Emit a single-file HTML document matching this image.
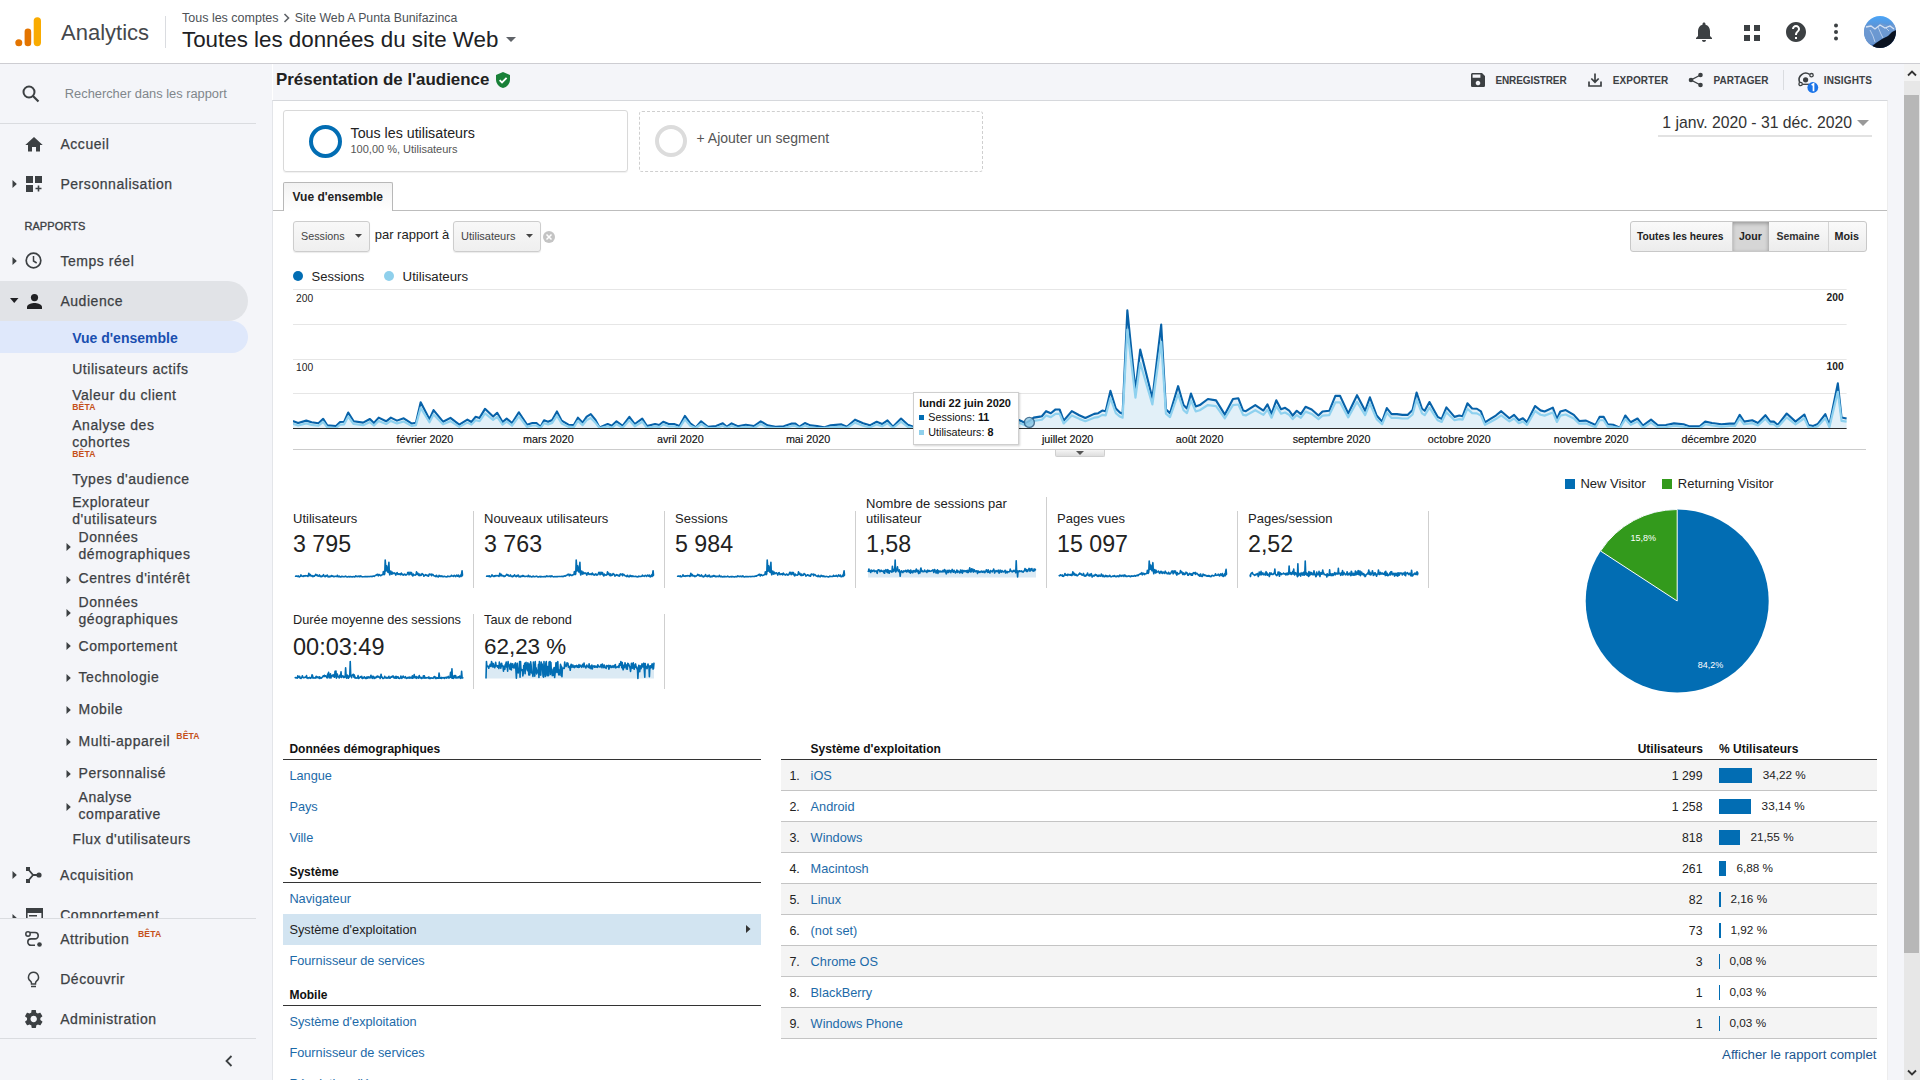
<!DOCTYPE html>
<html><head><meta charset="utf-8"><title>Analytics</title>
<style>
html,body{margin:0;padding:0;}
body{width:1920px;height:1080px;overflow:hidden;position:relative;background:#fff;font-family:"Liberation Sans", sans-serif;}
.t{position:absolute;white-space:nowrap;font-family:"Liberation Sans", sans-serif;}
svg{overflow:visible}
</style></head><body>
<div style="position:absolute;left:0px;top:0px;width:1920px;height:63px;background:#fff"></div><div style="position:absolute;left:0px;top:63px;width:1920px;height:1px;background:#cdcdd2"></div><svg style="position:absolute;left:10px;top:10px;" width="40" height="40" viewBox="0 0 40 40"><circle cx="8.8" cy="32.7" r="3.5" fill="#e37400"/><rect x="14.6" y="18.6" width="6.6" height="17.6" rx="3.3" fill="#e37400"/><rect x="23.7" y="7.2" width="7.3" height="29" rx="3.65" fill="#f9ab00"/></svg><div class="t" style="left:61.00px;top:21.88px;font-size:22px;line-height:22px;color:#45484c;font-weight:normal;">Analytics</div><div style="position:absolute;left:165px;top:16px;width:1px;height:32px;background:#dadce0"></div><div class="t" style="left:182.00px;top:12.22px;font-size:12.5px;line-height:12.5px;color:#4d5156;font-weight:normal;">Tous les comptes</div><svg style="position:absolute;left:283px;top:13px;" width="8" height="10" viewBox="0 0 8 10"><path d="M1.5 1 L5.5 5 L1.5 9" stroke="#5f6368" stroke-width="1.6" fill="none"/></svg><div class="t" style="left:294.80px;top:12.39px;font-size:12.3px;line-height:12.3px;color:#4d5156;font-weight:normal;">Site Web A Punta Bunifazinca</div><div class="t" style="left:182.00px;top:28.88px;font-size:22.35px;line-height:22.35px;color:#202124;font-weight:normal;">Toutes les données du site Web</div><svg style="position:absolute;left:506px;top:37px;" width="10" height="6" viewBox="0 0 10 6"><path d="M0 0 L10 0 L5 5 Z" fill="#5f6368"/></svg><svg style="position:absolute;left:1692px;top:20px;" width="24" height="24" viewBox="0 0 24 24"><path fill="#3c4043" d="M12 22c1.1 0 2-.9 2-2h-4c0 1.1.89 2 2 2zm6-6v-5c0-3.07-1.64-5.64-4.5-6.32V4c0-.83-.67-1.5-1.5-1.5s-1.5.67-1.5 1.5v.68C7.63 5.36 6 7.92 6 11v5l-2 2v1h16v-1l-2-2z"/></svg><svg style="position:absolute;left:1744px;top:25px;" width="16" height="16" viewBox="0 0 16 16"><rect x="0" y="0" width="6" height="6" fill="#3c4043"/><rect x="10" y="0" width="6" height="6" fill="#3c4043"/><rect x="0" y="10" width="6" height="6" fill="#3c4043"/><rect x="10" y="10" width="6" height="6" fill="#3c4043"/></svg><svg style="position:absolute;left:1784px;top:20px;" width="24" height="24" viewBox="0 0 24 24"><path fill="#3c4043" d="M12 2C6.48 2 2 6.48 2 12s4.48 10 10 10 10-4.48 10-10S17.52 2 12 2zm1 17h-2v-2h2v2zm2.07-7.75l-.9.92C13.45 12.9 13 13.5 13 15h-2v-.5c0-1.1.45-2.1 1.17-2.83l1.24-1.26c.37-.36.59-.86.59-1.41 0-1.1-.9-2-2-2s-2 .9-2 2H8c0-2.21 1.79-4 4-4s4 1.79 4 4c0 .88-.36 1.68-.93 2.25z"/></svg><svg style="position:absolute;left:1832px;top:22px;" width="8" height="20" viewBox="0 0 8 20"><circle cx="4" cy="3.5" r="2" fill="#3c4043"/><circle cx="4" cy="10" r="2" fill="#3c4043"/><circle cx="4" cy="16.5" r="2" fill="#3c4043"/></svg><svg style="position:absolute;left:1864px;top:16px;" width="32" height="32" viewBox="0 0 32 32"><defs><clipPath id="av"><circle cx="16" cy="16" r="16"/></clipPath><linearGradient id="avg" x1="0" y1="0" x2="0" y2="1"><stop offset="0" stop-color="#4aa5f8"/><stop offset="0.3" stop-color="#5b95d8"/><stop offset="1" stop-color="#3d6fb8"/></linearGradient></defs><g clip-path="url(#av)"><rect width="32" height="32" fill="url(#avg)"/><path d="M0 10 L6 8 L11 11 L17 7 L23 9 L32 8 L32 18 L20 22 L10 28 L0 30Z" fill="#6f9ad2" opacity="0.9"/><path d="M2 11 L7 10 L11 13 L16 9 L21 12 L26 10 L30 13" stroke="#e6eefa" stroke-width="1.3" fill="none" opacity="0.85"/><path d="M6 14 L9 20 L11 26 M14 11 L17 18 L19 22 M22 12 L25 15" stroke="#d5e3f6" stroke-width="1" fill="none" opacity="0.7"/><path d="M6 32 L12 27 L18 23 L24 20 L28 16 L32 14 L32 32Z" fill="#0a1220"/></g></svg><div style="position:absolute;left:0px;top:64px;width:272px;height:1016px;background:#f4f5f9"></div><div style="position:absolute;left:272px;top:100px;width:1px;height:980px;background:#e3e5e9"></div><svg style="position:absolute;left:21px;top:84px;" width="20" height="20" viewBox="0 0 20 20"><circle cx="8" cy="8" r="5.5" stroke="#3c4043" stroke-width="2" fill="none"/><path d="M12 12 L17.5 17.5" stroke="#3c4043" stroke-width="2.2"/></svg><div class="t" style="left:64.80px;top:88.42px;font-size:12.85px;line-height:12.85px;color:#80868b;font-weight:normal;">Rechercher dans les rapport</div><div style="position:absolute;left:0px;top:123px;width:256px;height:1px;background:#dadce0"></div><svg style="position:absolute;left:25px;top:137px;" width="18" height="15" viewBox="0 0 18 15"><path d="M7 14.5V10h4v4.5h4V8h2.7L9 0 .3 8H3v6.5z" fill="#3c4043"/></svg><div class="t" style="left:60.40px;top:137.15px;font-size:14px;line-height:14px;color:#3c4043;font-weight:normal;letter-spacing:0.55px;-webkit-text-stroke:0.25px #3c4043;">Accueil</div><svg style="position:absolute;left:12px;top:180px;" width="6" height="8" viewBox="0 0 6 8"><path d="M0.5 0 L4.8 4 L0.5 8Z" fill="#3c4043"/></svg><svg style="position:absolute;left:26px;top:176px;" width="16" height="16" viewBox="0 0 16 16"><rect x="0" y="0" width="7" height="7" fill="#3c4043"/><rect x="9" y="0" width="7" height="7" fill="#3c4043"/><rect x="0" y="9" width="7" height="7" fill="#3c4043"/><path d="M12.5 9.5v6M9.5 12.5h6" stroke="#3c4043" stroke-width="1.6"/></svg><div class="t" style="left:60.40px;top:177.15px;font-size:14px;line-height:14px;color:#3c4043;font-weight:normal;letter-spacing:0.55px;-webkit-text-stroke:0.25px #3c4043;">Personnalisation</div><div class="t" style="left:24.40px;top:221.29px;font-size:11px;line-height:11px;color:#3c4043;font-weight:normal;letter-spacing:0.1px;-webkit-text-stroke:0.35px #3c4043;">RAPPORTS</div><svg style="position:absolute;left:12px;top:257px;" width="6" height="8" viewBox="0 0 6 8"><path d="M0.5 0 L4.8 4 L0.5 8Z" fill="#3c4043"/></svg><svg style="position:absolute;left:25px;top:252px;" width="17" height="17" viewBox="0 0 17 17"><circle cx="8.5" cy="8.5" r="7.3" stroke="#3c4043" stroke-width="1.7" fill="none"/><path d="M8.5 4v5l3.2 2" stroke="#3c4043" stroke-width="1.5" fill="none"/></svg><div class="t" style="left:60.40px;top:254.35px;font-size:14px;line-height:14px;color:#3c4043;font-weight:normal;letter-spacing:0.55px;-webkit-text-stroke:0.25px #3c4043;">Temps réel</div><div style="position:absolute;left:0;top:281px;width:248px;height:40px;background:#e1e3e7;border-radius:0 20px 20px 0"></div><svg style="position:absolute;left:10px;top:298px;" width="9" height="6" viewBox="0 0 9 6"><path d="M0 0 L8.5 0 L4.25 5Z" fill="#202124"/></svg><svg style="position:absolute;left:27px;top:294px;" width="15" height="15" viewBox="0 0 15 15"><circle cx="7.5" cy="3.6" r="3.6" fill="#202124"/><path d="M0 15v-2.2c0-2.5 5-3.8 7.5-3.8S15 10.3 15 12.8V15z" fill="#202124"/></svg><div class="t" style="left:60.40px;top:294.35px;font-size:14px;line-height:14px;color:#3c4043;font-weight:normal;letter-spacing:0.55px;-webkit-text-stroke:0.25px #3c4043;">Audience</div><div style="position:absolute;left:0;top:321px;width:248px;height:32px;background:#dfe8fb;border-radius:0 16px 16px 0"></div><div class="t" style="left:72.20px;top:330.55px;font-size:14px;line-height:14px;color:#1a4fb0;font-weight:bold;letter-spacing:0px;">Vue d'ensemble</div><div class="t" style="left:72.20px;top:361.75px;font-size:14px;line-height:14px;color:#3c4043;font-weight:normal;letter-spacing:0.55px;-webkit-text-stroke:0.25px #3c4043;">Utilisateurs actifs</div><div class="t" style="left:72.20px;top:387.55px;font-size:14px;line-height:14px;color:#3c4043;font-weight:normal;letter-spacing:0.55px;-webkit-text-stroke:0.25px #3c4043;">Valeur du client</div><div class="t" style="left:72.20px;top:402.72px;font-size:8.6px;line-height:8.6px;color:#c5501a;font-weight:bold;letter-spacing:0.15px;">BÊTA</div><div class="t" style="left:72.20px;top:417.55px;font-size:14px;line-height:14px;color:#3c4043;font-weight:normal;letter-spacing:0.55px;-webkit-text-stroke:0.25px #3c4043;">Analyse des</div><div class="t" style="left:72.20px;top:434.55px;font-size:14px;line-height:14px;color:#3c4043;font-weight:normal;letter-spacing:0.55px;-webkit-text-stroke:0.25px #3c4043;">cohortes</div><div class="t" style="left:72.20px;top:449.72px;font-size:8.6px;line-height:8.6px;color:#c5501a;font-weight:bold;letter-spacing:0.15px;">BÊTA</div><div class="t" style="left:72.20px;top:471.75px;font-size:14px;line-height:14px;color:#3c4043;font-weight:normal;letter-spacing:0.55px;-webkit-text-stroke:0.25px #3c4043;">Types d'audience</div><div class="t" style="left:72.20px;top:495.45px;font-size:14px;line-height:14px;color:#3c4043;font-weight:normal;letter-spacing:0.55px;-webkit-text-stroke:0.25px #3c4043;">Explorateur</div><div class="t" style="left:72.20px;top:512.35px;font-size:14px;line-height:14px;color:#3c4043;font-weight:normal;letter-spacing:0.55px;-webkit-text-stroke:0.25px #3c4043;">d'utilisateurs</div><svg style="position:absolute;left:66px;top:543px;" width="6" height="8" viewBox="0 0 6 8"><path d="M0.5 0 L4.8 4 L0.5 8Z" fill="#3c4043"/></svg><div class="t" style="left:78.50px;top:529.65px;font-size:14px;line-height:14px;color:#3c4043;font-weight:normal;letter-spacing:0.55px;-webkit-text-stroke:0.25px #3c4043;">Données</div><div class="t" style="left:78.50px;top:546.75px;font-size:14px;line-height:14px;color:#3c4043;font-weight:normal;letter-spacing:0.55px;-webkit-text-stroke:0.25px #3c4043;">démographiques</div><svg style="position:absolute;left:66px;top:576px;" width="6" height="8" viewBox="0 0 6 8"><path d="M0.5 0 L4.8 4 L0.5 8Z" fill="#3c4043"/></svg><div class="t" style="left:78.50px;top:571.35px;font-size:14px;line-height:14px;color:#3c4043;font-weight:normal;letter-spacing:0.55px;-webkit-text-stroke:0.25px #3c4043;">Centres d'intérêt</div><svg style="position:absolute;left:66px;top:609px;" width="6" height="8" viewBox="0 0 6 8"><path d="M0.5 0 L4.8 4 L0.5 8Z" fill="#3c4043"/></svg><div class="t" style="left:78.50px;top:595.15px;font-size:14px;line-height:14px;color:#3c4043;font-weight:normal;letter-spacing:0.55px;-webkit-text-stroke:0.25px #3c4043;">Données</div><div class="t" style="left:78.50px;top:612.15px;font-size:14px;line-height:14px;color:#3c4043;font-weight:normal;letter-spacing:0.55px;-webkit-text-stroke:0.25px #3c4043;">géographiques</div><svg style="position:absolute;left:66px;top:642px;" width="6" height="8" viewBox="0 0 6 8"><path d="M0.5 0 L4.8 4 L0.5 8Z" fill="#3c4043"/></svg><div class="t" style="left:78.50px;top:638.75px;font-size:14px;line-height:14px;color:#3c4043;font-weight:normal;letter-spacing:0.55px;-webkit-text-stroke:0.25px #3c4043;">Comportement</div><svg style="position:absolute;left:66px;top:674px;" width="6" height="8" viewBox="0 0 6 8"><path d="M0.5 0 L4.8 4 L0.5 8Z" fill="#3c4043"/></svg><div class="t" style="left:78.50px;top:670.35px;font-size:14px;line-height:14px;color:#3c4043;font-weight:normal;letter-spacing:0.55px;-webkit-text-stroke:0.25px #3c4043;">Technologie</div><svg style="position:absolute;left:66px;top:706px;" width="6" height="8" viewBox="0 0 6 8"><path d="M0.5 0 L4.8 4 L0.5 8Z" fill="#3c4043"/></svg><div class="t" style="left:78.50px;top:702.15px;font-size:14px;line-height:14px;color:#3c4043;font-weight:normal;letter-spacing:0.55px;-webkit-text-stroke:0.25px #3c4043;">Mobile</div><svg style="position:absolute;left:66px;top:737.5px;" width="6" height="8" viewBox="0 0 6 8"><path d="M0.5 0 L4.8 4 L0.5 8Z" fill="#3c4043"/></svg><div class="t" style="left:78.50px;top:733.85px;font-size:14px;line-height:14px;color:#3c4043;font-weight:normal;letter-spacing:0.55px;-webkit-text-stroke:0.25px #3c4043;">Multi-appareil</div><div class="t" style="left:176.30px;top:732.22px;font-size:8.6px;line-height:8.6px;color:#c5501a;font-weight:bold;letter-spacing:0.15px;">BÊTA</div><svg style="position:absolute;left:66px;top:769.5px;" width="6" height="8" viewBox="0 0 6 8"><path d="M0.5 0 L4.8 4 L0.5 8Z" fill="#3c4043"/></svg><div class="t" style="left:78.50px;top:765.75px;font-size:14px;line-height:14px;color:#3c4043;font-weight:normal;letter-spacing:0.55px;-webkit-text-stroke:0.25px #3c4043;">Personnalisé</div><svg style="position:absolute;left:66px;top:802.5px;" width="6" height="8" viewBox="0 0 6 8"><path d="M0.5 0 L4.8 4 L0.5 8Z" fill="#3c4043"/></svg><div class="t" style="left:78.50px;top:790.15px;font-size:14px;line-height:14px;color:#3c4043;font-weight:normal;letter-spacing:0.55px;-webkit-text-stroke:0.25px #3c4043;">Analyse</div><div class="t" style="left:78.50px;top:807.25px;font-size:14px;line-height:14px;color:#3c4043;font-weight:normal;letter-spacing:0.55px;-webkit-text-stroke:0.25px #3c4043;">comparative</div><div class="t" style="left:72.60px;top:831.65px;font-size:14px;line-height:14px;color:#3c4043;font-weight:normal;letter-spacing:0.55px;-webkit-text-stroke:0.25px #3c4043;">Flux d'utilisateurs</div><svg style="position:absolute;left:12px;top:871px;" width="6" height="8" viewBox="0 0 6 8"><path d="M0.5 0 L4.8 4 L0.5 8Z" fill="#3c4043"/></svg><svg style="position:absolute;left:26px;top:867px;" width="16" height="16" viewBox="0 0 16 16"><rect x="0" y="0" width="4" height="4" fill="#3c4043"/><rect x="0" y="12" width="4" height="4" fill="#3c4043"/><circle cx="13" cy="8" r="2.6" fill="#3c4043"/><path d="M2 2 L7 8 L2 14 M7 8 H13" stroke="#3c4043" stroke-width="1.8" fill="none"/></svg><div class="t" style="left:60.10px;top:867.95px;font-size:14px;line-height:14px;color:#3c4043;font-weight:normal;letter-spacing:0.55px;-webkit-text-stroke:0.25px #3c4043;">Acquisition</div><div style="position:absolute;left:0;top:900px;width:272px;height:18px;overflow:hidden"><svg style="position:absolute;left:12px;top:14px" width="6" height="8"><path d="M0.5 0 L4.8 4 L0.5 8Z" fill="#3c4043"/></svg><svg style="position:absolute;left:26px;top:8px" width="17" height="15"><rect x="0.8" y="0.8" width="15.4" height="13.4" rx="1" stroke="#3c4043" stroke-width="1.6" fill="none"/><rect x="0" y="0" width="17" height="5" fill="#3c4043"/><rect x="3" y="7" width="8" height="1.5" fill="#3c4043"/></svg><div class="t" style="left:60.2px;top:7.95px;font-size:14px;line-height:14px;color:#3c4043;letter-spacing:0.55px;-webkit-text-stroke:0.25px #3c4043;">Comportement</div></div><div style="position:absolute;left:0px;top:918px;width:256px;height:1px;background:#dadce0"></div><svg style="position:absolute;left:25px;top:931px;" width="18" height="16" viewBox="0 0 18 16"><circle cx="3" cy="3" r="2.2" stroke="#3c4043" stroke-width="1.5" fill="none"/><path d="M5 3 H10 a3.2 3.2 0 0 1 0 6.4 H6 a3.2 3.2 0 0 0 0 6.4 H10" stroke="#3c4043" stroke-width="1.6" fill="none" transform="translate(0,-1.5)"/><circle cx="14.5" cy="13.5" r="2.3" fill="#3c4043"/></svg><div class="t" style="left:60.20px;top:932.05px;font-size:14px;line-height:14px;color:#3c4043;font-weight:normal;letter-spacing:0.55px;-webkit-text-stroke:0.25px #3c4043;">Attribution</div><div class="t" style="left:138.00px;top:930.32px;font-size:8.6px;line-height:8.6px;color:#c5501a;font-weight:bold;letter-spacing:0.15px;">BÊTA</div><svg style="position:absolute;left:27px;top:971px;" width="13" height="17" viewBox="0 0 13 17"><path d="M6.5 1.2a5 5 0 0 0-3 9c.6.5 1 1.2 1 2v.8h4v-.8c0-.8.4-1.5 1-2a5 5 0 0 0-3-9z" stroke="#3c4043" stroke-width="1.5" fill="none"/><path d="M4 15.5h5" stroke="#3c4043" stroke-width="1.5"/></svg><div class="t" style="left:60.20px;top:972.15px;font-size:14px;line-height:14px;color:#3c4043;font-weight:normal;letter-spacing:0.55px;-webkit-text-stroke:0.25px #3c4043;">Découvrir</div><svg style="position:absolute;left:25px;top:1010px;" width="18" height="18" viewBox="0 0 18 18"><path fill="#3c4043" d="M15.3 9.9c0-.3.1-.6.1-.9s0-.6-.1-.9l1.9-1.5c.2-.1.2-.4.1-.6l-1.8-3.1c-.1-.2-.4-.3-.6-.2l-2.2.9c-.5-.4-1-.7-1.5-.9L10.9.4C10.9.2 10.7 0 10.5 0H6.9c-.2 0-.4.2-.4.4l-.3 2.3c-.6.2-1.1.5-1.6.9l-2.2-.9c-.2-.1-.5 0-.6.2L.1 6c-.1.2-.1.5.1.6l1.9 1.5c0 .3-.1.6-.1.9s0 .6.1.9L.2 11.4c-.2.1-.2.4-.1.6l1.8 3.1c.1.2.4.3.6.2l2.2-.9c.5.4 1 .7 1.6.9l.3 2.3c0 .2.2.4.4.4h3.6c.2 0 .4-.2.4-.4l.3-2.3c.6-.2 1.1-.5 1.5-.9l2.2.9c.2.1.5 0 .6-.2l1.8-3.1c.1-.2.1-.5-.1-.6l-1.9-1.5zM8.7 12.2c-1.8 0-3.2-1.4-3.2-3.2s1.4-3.2 3.2-3.2 3.2 1.4 3.2 3.2-1.4 3.2-3.2 3.2z"/></svg><div class="t" style="left:60.20px;top:1012.15px;font-size:14px;line-height:14px;color:#3c4043;font-weight:normal;letter-spacing:0.55px;-webkit-text-stroke:0.25px #3c4043;">Administration</div><div style="position:absolute;left:0px;top:1038px;width:256px;height:1px;background:#dadce0"></div><svg style="position:absolute;left:224px;top:1055px;" width="10" height="12" viewBox="0 0 10 12"><path d="M7.5 1 L2.5 6 L7.5 11" stroke="#3c4043" stroke-width="1.8" fill="none"/></svg><div style="position:absolute;left:273px;top:64px;width:1631px;height:1016px;background:#f4f5f9"></div><div class="t" style="left:276.00px;top:71.69px;font-size:16.9px;line-height:16.9px;color:#212121;font-weight:bold;">Présentation de l'audience</div><svg style="position:absolute;left:495px;top:72px;" width="16" height="16" viewBox="0 0 16 16"><path d="M8 0 L15 3 V7.5 C15 11.6 12 15.2 8 16 C4 15.2 1 11.6 1 7.5 V3 Z" fill="#188038"/><path d="M4.6 8.2 L7 10.5 L11.6 5.8" stroke="#fff" stroke-width="1.8" fill="none"/></svg><svg style="position:absolute;left:1471px;top:73px;" width="14" height="14" viewBox="0 0 14 14"><path fill="#3c4043" d="M11 0H1.6C.7 0 0 .7 0 1.6v10.8c0 .9.7 1.6 1.6 1.6h10.8c.9 0 1.6-.7 1.6-1.6V3zM7 12.4c-1.3 0-2.3-1-2.3-2.3S5.7 7.8 7 7.8s2.3 1 2.3 2.3-1 2.3-2.3 2.3zM9.4 4.7H1.6V1.6h7.8z"/></svg><div class="t" style="left:1495.40px;top:76.13px;font-size:10px;line-height:10px;color:#3c4043;font-weight:bold;letter-spacing:-0.1px;">ENREGISTRER</div><svg style="position:absolute;left:1588px;top:73px;" width="14" height="14" viewBox="0 0 14 14"><path d="M7 0.5 V9 M3.3 5.5 L7 9.2 L10.7 5.5" stroke="#3c4043" stroke-width="1.7" fill="none"/><path d="M1 8.5 V13 H13 V8.5" stroke="#3c4043" stroke-width="1.7" fill="none"/></svg><div class="t" style="left:1612.75px;top:76.13px;font-size:10px;line-height:10px;color:#3c4043;font-weight:bold;letter-spacing:0.05px;">EXPORTER</div><svg style="position:absolute;left:1688px;top:72px;" width="16" height="16" viewBox="0 0 16 16"><circle cx="12.5" cy="3" r="2.3" fill="#3c4043"/><circle cx="3" cy="8" r="2.3" fill="#3c4043"/><circle cx="12.5" cy="13" r="2.3" fill="#3c4043"/><path d="M12.5 3 L3 8 L12.5 13" stroke="#3c4043" stroke-width="1.4" fill="none"/></svg><div class="t" style="left:1713.50px;top:76.13px;font-size:10px;line-height:10px;color:#3c4043;font-weight:bold;letter-spacing:0.05px;">PARTAGER</div><div style="position:absolute;left:1783px;top:70px;width:1px;height:20px;background:#dadce0"></div><svg style="position:absolute;left:1797px;top:71px;" width="22" height="22" viewBox="0 0 22 22"><path d="M2.6 11.2 A6.6 6.6 0 0 1 12.6 3.4" stroke="#3c4043" stroke-width="1.6" fill="none"/><circle cx="8.6" cy="8.8" r="2.6" fill="#3c4043"/><circle cx="14.5" cy="4.2" r="1.7" fill="none" stroke="#3c4043" stroke-width="1.3"/><circle cx="3.6" cy="13" r="1.7" fill="none" stroke="#3c4043" stroke-width="1.3"/><path d="M5.3 13.3 H12" stroke="#3c4043" stroke-width="1.3"/><circle cx="15.8" cy="16.5" r="5.4" fill="#1a73e8"/><path d="M14.6 13.9 L16.5 12.9 V20.2" stroke="#fff" stroke-width="1.7" fill="none"/></svg><div class="t" style="left:1823.75px;top:76.13px;font-size:10px;line-height:10px;color:#3c4043;font-weight:bold;letter-spacing:0.15px;">INSIGHTS</div><div style="position:absolute;left:272px;top:100px;width:1616px;height:980px;background:#fff;border-top:1px solid #d6d8dc;border-left:1px solid #e3e5e9;border-right:1px solid #ededed;box-sizing:border-box"></div><div style="position:absolute;left:283px;top:110px;width:345px;height:62px;box-sizing:border-box;border:1px solid #d9d9d9;border-radius:3px;box-shadow:0 1px 1px rgba(0,0,0,0.06)"></div><div style="position:absolute;left:308.5px;top:124.5px;width:33px;height:33px;box-sizing:border-box;border:4.5px solid #026db3;border-radius:50%"></div><div class="t" style="left:350.50px;top:125.74px;font-size:14.25px;line-height:14.25px;color:#222;font-weight:normal;">Tous les utilisateurs</div><div class="t" style="left:350.50px;top:143.69px;font-size:11px;line-height:11px;color:#555;font-weight:normal;">100,00 %, Utilisateurs</div><div style="position:absolute;left:639px;top:110.5px;width:344px;height:61px;box-sizing:border-box;border:1px dashed #cfcfcf;border-radius:3px"></div><div style="position:absolute;left:655px;top:125px;width:32px;height:32px;box-sizing:border-box;border:4px solid #dcdcdc;border-radius:50%"></div><div class="t" style="left:696.50px;top:130.95px;font-size:14px;line-height:14px;color:#555;font-weight:normal;">+ Ajouter un segment</div><div class="t" style="left:1662.30px;top:115.37px;font-size:15.75px;line-height:15.75px;color:#333;font-weight:normal;">1 janv. 2020 - 31 déc. 2020</div><svg style="position:absolute;left:1857px;top:120px;" width="12" height="6" viewBox="0 0 12 6"><path d="M0 0 L12 0 L6 6Z" fill="#999"/></svg><div style="position:absolute;left:1658px;top:135px;width:214px;height:2px;background:#e2e2e2"></div><div style="position:absolute;left:273px;top:210px;width:1614px;height:1px;background:#bdbdbd"></div><div style="position:absolute;left:282.5px;top:182px;width:110px;height:29px;box-sizing:border-box;border:1px solid #b8b8b8;border-bottom:none;border-radius:2px 2px 0 0;background:linear-gradient(#f2f2f2,#fff)"></div><div class="t" style="left:292.50px;top:190.64px;font-size:12px;line-height:12px;color:#222;font-weight:bold;">Vue d'ensemble</div><div style="position:absolute;left:292.5px;top:220.8px;width:77.0px;height:30.8px;box-sizing:border-box;border:1px solid #cdcdcd;border-radius:3px;background:linear-gradient(#f8f8f8,#efefef);box-shadow:0 1px 1px rgba(0,0,0,0.08)"></div><div class="t" style="left:301.00px;top:230.70px;font-size:10.75px;line-height:10.75px;color:#444;font-weight:normal;">Sessions</div><svg style="position:absolute;left:355px;top:234px;" width="7" height="4" viewBox="0 0 7 4"><path d="M0 0 L7 0 L3.5 3.8Z" fill="#444"/></svg><div class="t" style="left:374.70px;top:228.00px;font-size:13px;line-height:13px;color:#222;font-weight:normal;">par rapport à</div><div style="position:absolute;left:452.5px;top:220.8px;width:88.0px;height:30.8px;box-sizing:border-box;border:1px solid #cdcdcd;border-radius:3px;background:linear-gradient(#f8f8f8,#efefef);box-shadow:0 1px 1px rgba(0,0,0,0.08)"></div><div class="t" style="left:461.00px;top:231.29px;font-size:11px;line-height:11px;color:#444;font-weight:normal;">Utilisateurs</div><svg style="position:absolute;left:526px;top:234px;" width="7" height="4" viewBox="0 0 7 4"><path d="M0 0 L7 0 L3.5 3.8Z" fill="#444"/></svg><svg style="position:absolute;left:543px;top:230.5px;" width="12" height="12" viewBox="0 0 12 12"><circle cx="6" cy="6" r="6" fill="#c4c4c4"/><path d="M3.5 3.5 L8.5 8.5 M8.5 3.5 L3.5 8.5" stroke="#fff" stroke-width="1.5"/></svg><div style="position:absolute;left:1629.5px;top:221px;width:237px;height:30.5px;box-sizing:border-box;border:1px solid #c8c8c8;border-radius:3px;background:linear-gradient(#fafafa,#ececec);overflow:hidden"><div style="position:absolute;left:101.5px;top:0;width:37px;height:30px;background:#d6d6d6;box-shadow:inset 0 1px 4px rgba(0,0,0,0.35)"></div><div style="position:absolute;left:101px;top:0;width:1px;height:30px;background:#c8c8c8"></div><div style="position:absolute;left:197px;top:0;width:1px;height:30px;background:#d4d4d4"></div></div><div class="t" style="left:1637.00px;top:232.02px;font-size:10.25px;line-height:10.25px;color:#222;font-weight:bold;">Toutes les heures</div><div class="t" style="left:1739.00px;top:231.11px;font-size:10.5px;line-height:10.5px;color:#222;font-weight:bold;">Jour</div><div class="t" style="left:1776.40px;top:231.11px;font-size:10.5px;line-height:10.5px;color:#333;font-weight:bold;">Semaine</div><div class="t" style="left:1834.60px;top:230.90px;font-size:10.75px;line-height:10.75px;color:#222;font-weight:bold;">Mois</div><div style="position:absolute;left:293px;top:271px;width:10px;height:10px;border-radius:50%;background:#026db3"></div><div class="t" style="left:311.50px;top:269.90px;font-size:13px;line-height:13px;color:#222;font-weight:normal;">Sessions</div><div style="position:absolute;left:384px;top:271px;width:10px;height:10px;border-radius:50%;background:#8fd0ec"></div><div class="t" style="left:402.60px;top:269.68px;font-size:13.25px;line-height:13.25px;color:#222;font-weight:normal;">Utilisateurs</div><svg style="position:absolute;left:0;top:280px" width="1920" height="200" viewBox="0 0 1920 200"><rect x="293" y="9" width="1553.6" height="1" fill="#e6e6e6"/><rect x="293" y="44" width="1553.6" height="1" fill="#e6e6e6"/><rect x="293" y="79" width="1553.6" height="1" fill="#e6e6e6"/><rect x="293" y="113" width="1553.6" height="1" fill="#e6e6e6"/><path d="M293.00 141.30 L293.39 141.30 L298.12 143.06 L306.25 140.62 L311.67 142.25 L318.44 143.33 L323.18 138.86 L327.24 145.36 L336.04 146.04 L340.10 141.98 L344.16 141.71 L348.23 132.50 L353.64 141.30 L363.12 142.65 L369.89 139.00 L373.95 143.06 L378.69 137.64 L386.14 141.30 L390.88 137.64 L396.97 140.62 L403.74 138.32 L411.87 143.60 L415.93 142.65 L420.67 122.34 L429.47 139.27 L433.53 130.06 L443.01 141.71 L450.46 137.91 L459.26 144.69 L467.39 139.68 L471.45 141.98 L475.51 136.83 L479.57 137.91 L484.99 128.84 L493.11 136.56 L497.18 132.77 L502.59 141.98 L506.66 138.59 L512.07 143.06 L518.84 132.23 L526.97 144.69 L532.38 143.06 L536.45 143.06 L540.51 146.72 L544.06 140.35 L548.12 141.71 L552.19 139.95 L556.93 131.42 L561.67 140.62 L568.44 144.69 L573.85 144.96 L577.91 137.64 L582.65 142.65 L586.72 136.56 L590.78 134.12 L595.52 139.95 L599.58 147.39 L607.70 144.01 L611.77 145.77 L616.51 141.30 L622.60 145.77 L629.37 136.83 L634.79 144.01 L642.23 138.59 L646.97 146.04 L655.10 144.01 L659.16 144.96 L663.22 141.71 L668.64 144.01 L674.06 144.01 L679.47 146.04 L684.89 135.88 L690.30 143.33 L695.72 147.39 L701.14 141.30 L707.91 146.72 L716.03 146.04 L722.80 143.33 L726.87 146.72 L731.60 143.33 L737.70 146.31 L745.82 144.69 L753.95 146.04 L760.72 141.30 L767.49 145.36 L775.61 146.72 L783.74 146.31 L791.86 143.60 L795.42 143.60 L799.48 146.72 L804.90 143.06 L810.31 145.36 L817.08 146.04 L823.85 147.39 L830.62 145.36 L841.46 144.41 L846.87 146.72 L855.00 139.68 L863.12 143.33 L869.89 145.36 L876.66 141.71 L882.08 144.01 L887.49 140.35 L892.91 146.72 L901.04 138.59 L907.81 144.69 L913.22 146.72 L925.41 145.36 L938.95 144.69 L952.49 146.04 L966.03 144.01 L979.57 145.36 L993.11 143.33 L1006.66 144.69 L1018.84 139.95 L1025.61 143.06 L1029.00 141.30 L1033.74 137.64 L1040.00 136.61 L1041.86 136.29 L1046.09 131.19 L1050.83 133.22 L1055.57 129.43 L1059.63 129.43 L1063.70 140.67 L1071.82 131.19 L1079.27 135.25 L1085.36 137.96 L1094.16 133.90 L1098.23 133.22 L1102.29 130.51 L1105.67 131.19 L1110.41 110.88 L1115.83 128.48 L1119.89 132.55 L1122.60 133.90 L1127.34 30.31 L1135.46 110.20 L1140.20 69.58 L1152.39 118.33 L1161.19 44.53 L1165.93 129.16 L1169.99 133.22 L1178.12 106.14 L1183.53 125.10 L1186.92 128.48 L1190.98 113.59 L1195.72 126.45 L1199.78 125.10 L1207.91 119.00 L1216.03 120.36 L1224.83 134.58 L1232.96 119.00 L1238.38 118.33 L1243.11 130.51 L1245.82 131.19 L1255.30 125.10 L1263.43 130.51 L1267.49 124.42 L1271.55 133.90 L1276.29 120.36 L1281.03 129.16 L1285.09 127.81 L1289.15 130.51 L1292.71 135.52 L1296.77 130.78 L1300.83 134.16 L1305.57 126.72 L1311.67 129.42 L1318.44 135.52 L1322.50 131.46 L1329.27 130.78 L1335.36 115.88 L1340.10 115.88 L1348.23 133.49 L1357.03 115.21 L1365.15 130.78 L1369.89 117.24 L1376.66 135.52 L1382.08 141.61 L1386.82 128.07 L1391.56 134.16 L1396.97 134.16 L1402.39 134.84 L1407.81 134.84 L1412.55 130.10 L1416.61 112.50 L1422.02 128.75 L1424.73 130.78 L1429.47 121.98 L1437.60 136.87 L1441.66 138.90 L1446.40 127.39 L1454.52 136.87 L1459.26 135.52 L1462.65 136.19 L1467.39 123.33 L1472.13 128.48 L1476.87 128.75 L1480.93 131.46 L1484.99 142.29 L1490.41 138.90 L1495.82 135.52 L1501.24 131.18 L1509.36 138.23 L1514.10 134.84 L1518.84 140.26 L1522.90 138.23 L1526.97 142.29 L1535.09 126.04 L1540.51 130.37 L1544.57 131.46 L1552.86 127.66 L1556.93 138.90 L1560.31 131.46 L1565.73 130.10 L1573.85 134.84 L1579.27 140.93 L1586.04 140.66 L1595.52 145.00 L1599.58 136.87 L1603.64 136.87 L1607.70 144.32 L1613.12 144.73 L1619.89 147.70 L1625.31 135.52 L1630.72 142.29 L1637.49 138.50 L1642.91 145.67 L1651.04 139.58 L1657.81 145.27 L1665.93 145.00 L1674.06 143.37 L1683.53 144.32 L1688.95 146.35 L1699.78 146.35 L1705.20 141.61 L1711.97 142.97 L1721.45 144.32 L1729.57 143.64 L1734.99 143.64 L1739.73 134.84 L1744.06 141.61 L1752.19 140.26 L1758.01 142.97 L1765.39 135.18 L1770.20 141.61 L1773.85 141.61 L1776.97 144.32 L1778.59 143.98 L1786.72 133.49 L1795.52 141.61 L1804.32 134.50 L1808.38 145.00 L1813.12 146.01 L1817.86 143.98 L1825.31 134.16 L1829.37 145.00 L1837.83 103.36 L1841.56 137.55 L1846.60 138.56 L1846.60 148.00 L293.00 148.00 Z" fill="#e2f0f8"/><path d="M293.00 141.30 L293.39 141.30 L298.12 143.06 L306.25 140.62 L311.67 142.25 L318.44 143.33 L323.18 138.86 L327.24 145.36 L336.04 146.04 L340.10 141.98 L344.16 141.71 L348.23 132.50 L353.64 141.30 L363.12 142.65 L369.89 139.00 L373.95 143.06 L378.69 137.64 L386.14 141.30 L390.88 137.64 L396.97 140.62 L403.74 138.32 L411.87 143.60 L415.93 142.65 L420.67 122.34 L429.47 139.27 L433.53 130.06 L443.01 141.71 L450.46 137.91 L459.26 144.69 L467.39 139.68 L471.45 141.98 L475.51 136.83 L479.57 137.91 L484.99 128.84 L493.11 136.56 L497.18 132.77 L502.59 141.98 L506.66 138.59 L512.07 143.06 L518.84 132.23 L526.97 144.69 L532.38 143.06 L536.45 143.06 L540.51 146.72 L544.06 140.35 L548.12 141.71 L552.19 139.95 L556.93 131.42 L561.67 140.62 L568.44 144.69 L573.85 144.96 L577.91 137.64 L582.65 142.65 L586.72 136.56 L590.78 134.12 L595.52 139.95 L599.58 147.39 L607.70 144.01 L611.77 145.77 L616.51 141.30 L622.60 145.77 L629.37 136.83 L634.79 144.01 L642.23 138.59 L646.97 146.04 L655.10 144.01 L659.16 144.96 L663.22 141.71 L668.64 144.01 L674.06 144.01 L679.47 146.04 L684.89 135.88 L690.30 143.33 L695.72 147.39 L701.14 141.30 L707.91 146.72 L716.03 146.04 L722.80 143.33 L726.87 146.72 L731.60 143.33 L737.70 146.31 L745.82 144.69 L753.95 146.04 L760.72 141.30 L767.49 145.36 L775.61 146.72 L783.74 146.31 L791.86 143.60 L795.42 143.60 L799.48 146.72 L804.90 143.06 L810.31 145.36 L817.08 146.04 L823.85 147.39 L830.62 145.36 L841.46 144.41 L846.87 146.72 L855.00 139.68 L863.12 143.33 L869.89 145.36 L876.66 141.71 L882.08 144.01 L887.49 140.35 L892.91 146.72 L901.04 138.59 L907.81 144.69 L913.22 146.72 L925.41 145.36 L938.95 144.69 L952.49 146.04 L966.03 144.01 L979.57 145.36 L993.11 143.33 L1006.66 144.69 L1018.84 139.95 L1025.61 143.06 L1029.00 141.30 L1033.74 137.64 L1040.00 136.61 L1041.86 136.29 L1046.09 131.19 L1050.83 133.22 L1055.57 129.43 L1059.63 129.43 L1063.70 140.67 L1071.82 131.19 L1079.27 135.25 L1085.36 137.96 L1094.16 133.90 L1098.23 133.22 L1102.29 130.51 L1105.67 131.19 L1110.41 110.88 L1115.83 128.48 L1119.89 132.55 L1122.60 133.90 L1127.34 30.31 L1135.46 110.20 L1140.20 69.58 L1152.39 118.33 L1161.19 44.53 L1165.93 129.16 L1169.99 133.22 L1178.12 106.14 L1183.53 125.10 L1186.92 128.48 L1190.98 113.59 L1195.72 126.45 L1199.78 125.10 L1207.91 119.00 L1216.03 120.36 L1224.83 134.58 L1232.96 119.00 L1238.38 118.33 L1243.11 130.51 L1245.82 131.19 L1255.30 125.10 L1263.43 130.51 L1267.49 124.42 L1271.55 133.90 L1276.29 120.36 L1281.03 129.16 L1285.09 127.81 L1289.15 130.51 L1292.71 135.52 L1296.77 130.78 L1300.83 134.16 L1305.57 126.72 L1311.67 129.42 L1318.44 135.52 L1322.50 131.46 L1329.27 130.78 L1335.36 115.88 L1340.10 115.88 L1348.23 133.49 L1357.03 115.21 L1365.15 130.78 L1369.89 117.24 L1376.66 135.52 L1382.08 141.61 L1386.82 128.07 L1391.56 134.16 L1396.97 134.16 L1402.39 134.84 L1407.81 134.84 L1412.55 130.10 L1416.61 112.50 L1422.02 128.75 L1424.73 130.78 L1429.47 121.98 L1437.60 136.87 L1441.66 138.90 L1446.40 127.39 L1454.52 136.87 L1459.26 135.52 L1462.65 136.19 L1467.39 123.33 L1472.13 128.48 L1476.87 128.75 L1480.93 131.46 L1484.99 142.29 L1490.41 138.90 L1495.82 135.52 L1501.24 131.18 L1509.36 138.23 L1514.10 134.84 L1518.84 140.26 L1522.90 138.23 L1526.97 142.29 L1535.09 126.04 L1540.51 130.37 L1544.57 131.46 L1552.86 127.66 L1556.93 138.90 L1560.31 131.46 L1565.73 130.10 L1573.85 134.84 L1579.27 140.93 L1586.04 140.66 L1595.52 145.00 L1599.58 136.87 L1603.64 136.87 L1607.70 144.32 L1613.12 144.73 L1619.89 147.70 L1625.31 135.52 L1630.72 142.29 L1637.49 138.50 L1642.91 145.67 L1651.04 139.58 L1657.81 145.27 L1665.93 145.00 L1674.06 143.37 L1683.53 144.32 L1688.95 146.35 L1699.78 146.35 L1705.20 141.61 L1711.97 142.97 L1721.45 144.32 L1729.57 143.64 L1734.99 143.64 L1739.73 134.84 L1744.06 141.61 L1752.19 140.26 L1758.01 142.97 L1765.39 135.18 L1770.20 141.61 L1773.85 141.61 L1776.97 144.32 L1778.59 143.98 L1786.72 133.49 L1795.52 141.61 L1804.32 134.50 L1808.38 145.00 L1813.12 146.01 L1817.86 143.98 L1825.31 134.16 L1829.37 145.00 L1837.83 103.36 L1841.56 137.55 L1846.60 138.56" fill="none" stroke="#0762a9" stroke-width="2.1" stroke-linejoin="round"/><path d="M293.00 144.00 L293.39 144.00 L298.12 145.50 L306.25 143.43 L311.67 144.81 L318.44 145.73 L323.18 141.93 L327.24 147.46 L336.04 148.00 L340.10 144.58 L344.16 144.35 L348.23 136.52 L353.64 144.00 L363.12 145.16 L369.89 142.05 L373.95 145.50 L378.69 140.90 L386.14 144.00 L390.88 140.90 L396.97 143.43 L403.74 141.47 L411.87 145.96 L415.93 145.16 L420.67 127.89 L429.47 142.28 L433.53 134.45 L443.01 144.35 L450.46 141.13 L459.26 146.88 L467.39 142.62 L471.45 144.58 L475.51 140.21 L479.57 141.13 L484.99 133.42 L493.11 139.98 L497.18 136.75 L502.59 144.58 L506.66 141.70 L512.07 145.50 L518.84 136.29 L526.97 146.88 L532.38 145.50 L536.45 145.50 L540.51 148.00 L544.06 143.20 L548.12 144.35 L552.19 142.85 L556.93 135.60 L561.67 143.43 L568.44 146.88 L573.85 147.11 L577.91 140.90 L582.65 145.16 L586.72 139.98 L590.78 137.90 L595.52 142.85 L599.58 148.00 L607.70 146.31 L611.77 147.80 L616.51 144.00 L622.60 147.80 L629.37 140.21 L634.79 146.31 L642.23 141.70 L646.97 148.00 L655.10 146.31 L659.16 147.11 L663.22 144.35 L668.64 146.31 L674.06 146.31 L679.47 148.00 L684.89 139.40 L690.30 145.73 L695.72 148.00 L701.14 144.00 L707.91 148.00 L716.03 148.00 L722.80 145.73 L726.87 148.00 L731.60 145.73 L737.70 148.00 L745.82 146.88 L753.95 148.00 L760.72 144.00 L767.49 147.46 L775.61 148.00 L783.74 148.00 L791.86 145.96 L795.42 145.96 L799.48 148.00 L804.90 145.50 L810.31 147.46 L817.08 148.00 L823.85 148.00 L830.62 147.46 L841.46 146.65 L846.87 148.00 L855.00 142.62 L863.12 145.73 L869.89 147.46 L876.66 144.35 L882.08 146.31 L887.49 143.20 L892.91 148.00 L901.04 141.70 L907.81 146.88 L913.22 148.00 L925.41 147.46 L938.95 146.88 L952.49 148.00 L966.03 146.31 L979.57 147.46 L993.11 145.73 L1006.66 146.88 L1018.84 142.85 L1025.61 145.50 L1029.00 144.00 L1033.74 140.90 L1040.00 140.02 L1041.86 139.75 L1046.09 135.41 L1050.83 137.14 L1055.57 133.92 L1059.63 133.92 L1063.70 143.47 L1071.82 135.41 L1079.27 138.87 L1085.36 141.17 L1094.16 137.71 L1098.23 137.14 L1102.29 134.84 L1105.67 135.41 L1110.41 118.15 L1115.83 133.11 L1119.89 136.56 L1122.60 137.71 L1127.34 49.66 L1135.46 117.57 L1140.20 83.04 L1152.39 124.48 L1161.19 61.75 L1165.93 133.69 L1169.99 137.14 L1178.12 114.12 L1183.53 130.23 L1186.92 133.11 L1190.98 120.45 L1195.72 131.38 L1199.78 130.23 L1207.91 125.05 L1216.03 126.21 L1224.83 138.29 L1232.96 125.05 L1238.38 124.48 L1243.11 134.84 L1245.82 135.41 L1255.30 130.23 L1263.43 134.84 L1267.49 129.66 L1271.55 137.71 L1276.29 126.21 L1281.03 133.69 L1285.09 132.54 L1289.15 134.84 L1292.71 139.09 L1296.77 135.06 L1300.83 137.94 L1305.57 131.61 L1311.67 133.91 L1318.44 139.09 L1322.50 135.64 L1329.27 135.06 L1335.36 122.40 L1340.10 122.40 L1348.23 137.36 L1357.03 121.83 L1365.15 135.06 L1369.89 123.55 L1376.66 139.09 L1382.08 144.27 L1386.82 132.76 L1391.56 137.94 L1396.97 137.94 L1402.39 138.51 L1407.81 138.51 L1412.55 134.49 L1416.61 119.52 L1422.02 133.34 L1424.73 135.06 L1429.47 127.58 L1437.60 140.24 L1441.66 141.97 L1446.40 132.18 L1454.52 140.24 L1459.26 139.09 L1462.65 139.67 L1467.39 128.73 L1472.13 133.11 L1476.87 133.34 L1480.93 135.64 L1484.99 144.85 L1490.41 141.97 L1495.82 139.09 L1501.24 135.41 L1509.36 141.39 L1514.10 138.51 L1518.84 143.12 L1522.90 141.39 L1526.97 144.85 L1535.09 131.03 L1540.51 134.72 L1544.57 135.64 L1552.86 132.41 L1556.93 141.97 L1560.31 135.64 L1565.73 134.49 L1573.85 138.51 L1579.27 143.69 L1586.04 143.46 L1595.52 147.15 L1599.58 140.24 L1603.64 140.24 L1607.70 146.57 L1613.12 146.92 L1619.89 148.00 L1625.31 139.09 L1630.72 144.85 L1637.49 141.62 L1642.91 147.72 L1651.04 142.54 L1657.81 147.38 L1665.93 147.15 L1674.06 145.77 L1683.53 146.57 L1688.95 148.00 L1699.78 148.00 L1705.20 144.27 L1711.97 145.42 L1721.45 146.57 L1729.57 146.00 L1734.99 146.00 L1739.73 138.51 L1744.06 144.27 L1752.19 143.12 L1758.01 145.42 L1765.39 138.80 L1770.20 144.27 L1773.85 144.27 L1776.97 146.57 L1778.59 146.28 L1786.72 137.36 L1795.52 144.27 L1804.32 138.23 L1808.38 147.15 L1813.12 148.00 L1817.86 146.28 L1825.31 137.94 L1829.37 147.15 L1837.83 111.75 L1841.56 140.82 L1846.60 141.68" fill="none" stroke="#8ed1ef" stroke-width="2.2" stroke-linejoin="round"/><rect x="293" y="148.0" width="1553.6" height="1" fill="#2a2a2a"/><rect x="293" y="169.0" width="1573" height="1" fill="#cccccc"/><circle cx="1029.36" cy="142.41" r="5" fill="#8fc9e6" stroke="#2f5f85" stroke-width="1.4" opacity="0.85"/></svg><div class="t" style="left:296.00px;top:293.92px;font-size:10.25px;line-height:10.25px;color:#222;font-weight:normal;">200</div><div class="t" style="left:296.00px;top:362.72px;font-size:10.25px;line-height:10.25px;color:#222;font-weight:normal;">100</div><div class="t" style="right:76.30px;top:293.02px;font-size:10.25px;line-height:10.25px;color:#222;font-weight:bold;">200</div><div class="t" style="right:76.30px;top:362.12px;font-size:10.25px;line-height:10.25px;color:#222;font-weight:bold;">100</div><div class="t" style="left:124.95px;width:600px;text-align:center;top:433.90px;font-size:10.75px;line-height:10.75px;color:#111;font-weight:normal;-webkit-text-stroke:0.15px #111;">février 2020</div><div class="t" style="left:248.39px;width:600px;text-align:center;top:433.90px;font-size:10.75px;line-height:10.75px;color:#111;font-weight:normal;-webkit-text-stroke:0.15px #111;">mars 2020</div><div class="t" style="left:380.34px;width:600px;text-align:center;top:433.90px;font-size:10.75px;line-height:10.75px;color:#111;font-weight:normal;-webkit-text-stroke:0.15px #111;">avril 2020</div><div class="t" style="left:508.03px;width:600px;text-align:center;top:433.90px;font-size:10.75px;line-height:10.75px;color:#111;font-weight:normal;-webkit-text-stroke:0.15px #111;">mai 2020</div><div class="t" style="left:767.67px;width:600px;text-align:center;top:433.90px;font-size:10.75px;line-height:10.75px;color:#111;font-weight:normal;-webkit-text-stroke:0.15px #111;">juillet 2020</div><div class="t" style="left:899.62px;width:600px;text-align:center;top:433.90px;font-size:10.75px;line-height:10.75px;color:#111;font-weight:normal;-webkit-text-stroke:0.15px #111;">août 2020</div><div class="t" style="left:1031.57px;width:600px;text-align:center;top:433.90px;font-size:10.75px;line-height:10.75px;color:#111;font-weight:normal;-webkit-text-stroke:0.15px #111;">septembre 2020</div><div class="t" style="left:1159.26px;width:600px;text-align:center;top:433.90px;font-size:10.75px;line-height:10.75px;color:#111;font-weight:normal;-webkit-text-stroke:0.15px #111;">octobre 2020</div><div class="t" style="left:1291.21px;width:600px;text-align:center;top:433.90px;font-size:10.75px;line-height:10.75px;color:#111;font-weight:normal;-webkit-text-stroke:0.15px #111;">novembre 2020</div><div class="t" style="left:1418.91px;width:600px;text-align:center;top:433.90px;font-size:10.75px;line-height:10.75px;color:#111;font-weight:normal;-webkit-text-stroke:0.15px #111;">décembre 2020</div><div style="position:absolute;left:1055px;top:449.5px;width:50px;height:7px;background:linear-gradient(#f4f4f4,#dedede);border:1px solid #cfcfcf;border-top:none;box-sizing:border-box;border-radius:0 0 2px 2px"></div><svg style="position:absolute;left:1076px;top:451px;" width="8" height="5" viewBox="0 0 8 5"><path d="M0 0 L8 0 L4 4Z" fill="#555"/></svg><div style="position:absolute;left:912.5px;top:391.5px;width:106px;height:53px;box-sizing:border-box;background:#fff;border:1px solid #cfcfcf;box-shadow:1px 1px 2px rgba(0,0,0,0.18)"></div><div class="t" style="left:919.30px;top:397.89px;font-size:11px;line-height:11px;color:#111;font-weight:bold;">lundi 22 juin 2020</div><div style="position:absolute;left:919px;top:415px;width:5px;height:5px;background:#026db3"></div><div class="t" style="left:928.30px;top:411.90px;font-size:10.75px;line-height:10.75px;color:#111;font-weight:normal;">Sessions: <b>11</b></div><div style="position:absolute;left:919px;top:429.5px;width:5px;height:5px;background:#8fd0ec"></div><div class="t" style="left:928.30px;top:426.90px;font-size:10.75px;line-height:10.75px;color:#111;font-weight:normal;">Utilisateurs: <b>8</b></div><div class="t" style="left:293.00px;top:512.00px;font-size:13px;line-height:13px;color:#222;font-weight:normal;">Utilisateurs</div><div class="t" style="left:293.00px;top:533.06px;font-size:23.2px;line-height:23.2px;color:#222;font-weight:normal;">3 795</div><div style="position:absolute;left:472.5px;top:511px;width:1px;height:76.5px;background:#cfcfcf"></div><div class="t" style="left:484.00px;top:512.00px;font-size:13px;line-height:13px;color:#222;font-weight:normal;">Nouveaux utilisateurs</div><div class="t" style="left:484.00px;top:533.06px;font-size:23.2px;line-height:23.2px;color:#222;font-weight:normal;">3 763</div><div style="position:absolute;left:663.5px;top:511px;width:1px;height:76.5px;background:#cfcfcf"></div><div class="t" style="left:675.00px;top:512.00px;font-size:13px;line-height:13px;color:#222;font-weight:normal;">Sessions</div><div class="t" style="left:675.00px;top:533.06px;font-size:23.2px;line-height:23.2px;color:#222;font-weight:normal;">5 984</div><div style="position:absolute;left:854.5px;top:511px;width:1px;height:76.5px;background:#cfcfcf"></div><div class="t" style="left:866.00px;top:496.70px;font-size:13px;line-height:13px;color:#222;font-weight:normal;">Nombre de sessions par</div><div class="t" style="left:866.00px;top:511.60px;font-size:13px;line-height:13px;color:#222;font-weight:normal;">utilisateur</div><div class="t" style="left:866.00px;top:533.06px;font-size:23.2px;line-height:23.2px;color:#222;font-weight:normal;">1,58</div><div style="position:absolute;left:1045.5px;top:496.5px;width:1px;height:91.0px;background:#cfcfcf"></div><div class="t" style="left:1057.00px;top:512.00px;font-size:13px;line-height:13px;color:#222;font-weight:normal;">Pages vues</div><div class="t" style="left:1057.00px;top:533.06px;font-size:23.2px;line-height:23.2px;color:#222;font-weight:normal;">15 097</div><div style="position:absolute;left:1236.5px;top:511px;width:1px;height:76.5px;background:#cfcfcf"></div><div class="t" style="left:1248.00px;top:512.00px;font-size:13px;line-height:13px;color:#222;font-weight:normal;">Pages/session</div><div class="t" style="left:1248.00px;top:533.06px;font-size:23.2px;line-height:23.2px;color:#222;font-weight:normal;">2,52</div><div style="position:absolute;left:1427.5px;top:511px;width:1px;height:76.5px;background:#cfcfcf"></div><div class="t" style="left:293.00px;top:614.21px;font-size:12.75px;line-height:12.75px;color:#222;font-weight:normal;">Durée moyenne des sessions</div><div class="t" style="left:293.00px;top:635.51px;font-size:23.5px;line-height:23.5px;color:#222;font-weight:normal;">00:03:49</div><div style="position:absolute;left:472.5px;top:613.5px;width:1px;height:75px;background:#cfcfcf"></div><div class="t" style="left:484.00px;top:614.21px;font-size:12.75px;line-height:12.75px;color:#222;font-weight:normal;">Taux de rebond</div><div class="t" style="left:484.00px;top:636.44px;font-size:22.4px;line-height:22.4px;color:#222;font-weight:normal;">62,23 %</div><div style="position:absolute;left:663.5px;top:613.5px;width:1px;height:75px;background:#cfcfcf"></div><svg style="position:absolute;left:0;top:0" width="1920" height="1080" viewBox="0 0 1920 1080"><path d="M295.00 576.08 L295.46 576.26 L295.92 576.26 L296.38 576.02 L296.84 576.07 L297.30 576.20 L297.76 576.47 L298.22 575.86 L298.68 576.76 L299.14 576.76 L299.60 576.90 L300.06 576.25 L300.52 576.12 L300.98 574.88 L301.44 575.80 L301.90 576.14 L302.36 576.37 L302.82 576.10 L303.28 575.84 L303.75 576.36 L304.21 575.71 L304.67 575.78 L305.13 576.05 L305.59 575.64 L306.05 575.86 L306.51 575.81 L306.97 575.71 L307.43 576.13 L307.89 576.45 L308.35 575.87 L308.81 573.20 L309.27 574.47 L309.73 575.62 L310.19 574.38 L310.65 575.23 L311.11 576.07 L311.57 575.88 L312.03 575.59 L312.49 576.12 L312.95 576.63 L313.41 576.26 L313.87 575.88 L314.33 576.19 L314.79 575.51 L315.25 575.43 L315.71 574.29 L316.17 574.77 L316.63 575.44 L317.09 574.93 L317.55 575.95 L318.01 575.87 L318.47 576.19 L318.93 575.82 L319.39 574.92 L319.85 575.67 L320.32 576.62 L320.78 576.35 L321.24 576.30 L321.70 576.76 L322.16 575.91 L322.62 576.17 L323.08 575.74 L323.54 574.69 L324.00 575.83 L324.46 576.37 L324.92 576.62 L325.38 576.72 L325.84 575.66 L326.30 576.15 L326.76 575.47 L327.22 575.02 L327.68 575.80 L328.14 576.91 L328.60 576.75 L329.06 576.49 L329.52 576.80 L329.98 576.20 L330.44 576.63 L330.90 576.37 L331.36 575.56 L331.82 576.34 L332.28 576.16 L332.74 575.80 L333.20 576.53 L333.66 576.62 L334.12 576.50 L334.58 576.58 L335.04 576.22 L335.50 576.33 L335.96 576.41 L336.42 576.55 L336.88 576.56 L337.35 575.30 L337.81 576.04 L338.27 576.67 L338.73 576.62 L339.19 576.12 L339.65 576.69 L340.11 576.85 L340.57 576.89 L341.03 576.72 L341.49 576.35 L341.95 576.79 L342.41 576.30 L342.87 576.60 L343.33 576.76 L343.79 576.74 L344.25 576.66 L344.71 576.66 L345.17 576.42 L345.63 576.14 L346.09 576.53 L346.55 576.82 L347.01 576.93 L347.47 576.98 L347.93 576.75 L348.39 576.65 L348.85 576.56 L349.31 576.46 L349.77 577.00 L350.23 576.54 L350.69 576.50 L351.15 576.69 L351.61 576.79 L352.07 576.96 L352.53 576.90 L352.99 576.64 L353.45 576.67 L353.92 576.71 L354.38 576.70 L354.84 576.96 L355.30 576.31 L355.76 575.87 L356.22 576.05 L356.68 576.49 L357.14 576.65 L357.60 576.49 L358.06 576.10 L358.52 576.43 L358.98 576.35 L359.44 576.11 L359.90 576.91 L360.36 576.17 L360.82 575.86 L361.28 576.30 L361.74 576.64 L362.20 576.82 L362.66 576.84 L363.12 576.68 L363.58 576.77 L364.04 576.70 L364.50 576.64 L364.96 576.52 L365.42 576.76 L365.88 576.64 L366.34 576.72 L366.80 576.58 L367.26 576.63 L367.72 576.58 L368.18 576.61 L368.64 576.53 L369.10 576.56 L369.56 576.58 L370.02 576.54 L370.48 576.49 L370.95 576.35 L371.41 576.40 L371.87 576.65 L372.33 576.58 L372.79 576.19 L373.25 575.94 L373.71 576.08 L374.17 576.38 L374.63 575.98 L375.09 575.56 L375.55 575.56 L376.01 575.23 L376.47 574.62 L376.93 574.83 L377.39 574.49 L377.85 574.24 L378.31 575.83 L378.77 575.36 L379.23 574.51 L379.69 574.91 L380.15 575.20 L380.61 575.67 L381.07 575.47 L381.53 575.01 L381.99 574.97 L382.45 574.56 L382.91 574.50 L383.37 571.61 L383.83 573.57 L384.29 574.56 L384.75 573.80 L385.21 560.00 L385.67 565.91 L386.13 571.03 L386.59 565.76 L387.05 568.04 L387.52 570.55 L387.98 572.20 L388.44 567.05 L388.90 562.24 L389.36 573.37 L389.82 574.88 L390.28 572.88 L390.74 571.00 L391.20 573.26 L391.66 574.17 L392.12 572.15 L392.58 573.82 L393.04 573.65 L393.50 573.34 L393.96 572.88 L394.42 572.98 L394.88 573.16 L395.34 574.29 L395.80 575.13 L396.26 573.82 L396.72 572.88 L397.18 572.68 L397.64 574.08 L398.10 574.53 L398.56 574.10 L399.02 573.77 L399.48 574.20 L399.94 574.51 L400.40 573.72 L400.86 574.80 L401.32 573.12 L401.78 574.23 L402.24 574.05 L402.70 574.55 L403.16 575.17 L403.62 574.53 L404.08 574.88 L404.55 574.06 L405.01 574.21 L405.47 574.71 L405.93 575.16 L406.39 574.75 L406.85 574.60 L407.31 573.84 L407.77 572.41 L408.23 572.30 L408.69 573.81 L409.15 574.88 L409.61 573.41 L410.07 572.16 L410.53 573.48 L410.99 574.29 L411.45 572.53 L411.91 574.25 L412.37 575.45 L412.83 575.98 L413.29 574.08 L413.75 575.08 L414.21 574.96 L414.67 575.05 L415.13 575.16 L415.59 575.05 L416.05 574.47 L416.51 571.83 L416.97 573.87 L417.43 574.41 L417.89 573.16 L418.35 574.30 L418.81 575.54 L419.27 575.60 L419.73 573.97 L420.19 574.83 L420.65 575.53 L421.12 575.19 L421.58 575.02 L422.04 573.46 L422.50 574.20 L422.96 574.24 L423.42 574.63 L423.88 576.22 L424.34 575.77 L424.80 575.43 L425.26 574.97 L425.72 574.59 L426.18 575.29 L426.64 575.44 L427.10 575.14 L427.56 575.94 L428.02 575.66 L428.48 576.22 L428.94 574.81 L429.40 574.02 L429.86 574.43 L430.32 574.73 L430.78 574.48 L431.24 574.08 L431.70 575.67 L432.16 574.56 L432.62 574.38 L433.08 574.69 L433.54 575.30 L434.00 575.87 L434.46 576.00 L434.92 576.03 L435.38 576.34 L435.84 576.62 L436.30 575.36 L436.76 575.55 L437.22 576.54 L437.68 576.55 L438.15 576.94 L438.61 576.69 L439.07 575.36 L439.53 576.11 L439.99 576.11 L440.45 575.86 L440.91 576.69 L441.37 576.34 L441.83 575.85 L442.29 576.26 L442.75 576.68 L443.21 576.56 L443.67 576.61 L444.13 576.40 L444.59 576.42 L445.05 576.47 L445.51 576.67 L445.97 576.73 L446.43 576.78 L446.89 576.93 L447.35 576.56 L447.81 576.05 L448.27 576.40 L448.73 576.45 L449.19 576.43 L449.65 576.63 L450.11 576.41 L450.57 576.42 L451.03 576.13 L451.49 575.24 L451.95 576.03 L452.41 576.07 L452.87 575.98 L453.33 576.40 L453.79 575.79 L454.25 575.28 L454.72 575.98 L455.18 576.08 L455.64 576.58 L456.10 575.81 L456.56 575.08 L457.02 575.64 L457.48 576.09 L457.94 575.62 L458.40 575.12 L458.86 576.62 L459.32 576.89 L459.78 576.58 L460.24 575.75 L460.70 574.97 L461.16 576.48 L461.62 573.48 L462.08 570.75 L462.54 575.59 L463.00 575.66" fill="none" stroke="#026db3" stroke-width="1.6" stroke-linejoin="round"/><path d="M486.00 576.09 L486.46 576.24 L486.92 576.23 L487.38 575.98 L487.84 576.11 L488.30 576.12 L488.76 576.48 L489.22 575.79 L489.68 576.68 L490.14 576.66 L490.60 576.88 L491.06 576.23 L491.52 576.02 L491.98 574.86 L492.44 575.82 L492.90 576.01 L493.36 576.41 L493.82 575.97 L494.28 575.83 L494.75 576.33 L495.21 575.56 L495.67 575.74 L496.13 575.96 L496.59 575.61 L497.05 575.72 L497.51 575.71 L497.97 575.66 L498.43 576.15 L498.89 576.42 L499.35 575.82 L499.81 573.21 L500.27 574.43 L500.73 575.63 L501.19 574.34 L501.65 575.18 L502.11 575.98 L502.57 575.78 L503.03 575.49 L503.49 576.08 L503.95 576.58 L504.41 576.13 L504.87 575.85 L505.33 576.09 L505.79 575.36 L506.25 575.30 L506.71 574.24 L507.17 574.77 L507.63 575.37 L508.09 574.85 L508.55 575.89 L509.01 575.85 L509.47 576.14 L509.93 575.85 L510.39 574.92 L510.85 575.69 L511.32 576.53 L511.78 576.20 L512.24 576.31 L512.70 576.79 L513.16 575.81 L513.62 576.14 L514.08 575.68 L514.54 574.73 L515.00 575.84 L515.46 576.28 L515.92 576.54 L516.38 576.59 L516.84 575.52 L517.30 576.12 L517.76 575.40 L518.22 574.99 L518.68 575.75 L519.14 576.87 L519.60 576.59 L520.06 576.41 L520.52 576.80 L520.98 576.11 L521.44 576.48 L521.90 576.24 L522.36 575.50 L522.82 576.37 L523.28 576.05 L523.74 575.66 L524.20 576.42 L524.66 576.57 L525.12 576.46 L525.58 576.48 L526.04 576.24 L526.50 576.21 L526.96 576.36 L527.42 576.58 L527.88 576.44 L528.35 575.27 L528.81 576.06 L529.27 576.67 L529.73 576.49 L530.19 576.13 L530.65 576.57 L531.11 576.73 L531.57 576.91 L532.03 576.67 L532.49 576.24 L532.95 576.74 L533.41 576.17 L533.87 576.57 L534.33 576.67 L534.79 576.74 L535.25 576.54 L535.71 576.54 L536.17 576.35 L536.63 576.12 L537.09 576.50 L537.55 576.74 L538.01 576.94 L538.47 576.91 L538.93 576.73 L539.39 576.62 L539.85 576.54 L540.31 576.33 L540.77 577.00 L541.23 576.53 L541.69 576.50 L542.15 576.72 L542.61 576.75 L543.07 576.83 L543.53 576.76 L543.99 576.59 L544.45 576.63 L544.92 576.57 L545.38 576.64 L545.84 576.89 L546.30 576.22 L546.76 575.90 L547.22 575.93 L547.68 576.50 L548.14 576.59 L548.60 576.35 L549.06 576.04 L549.52 576.40 L549.98 576.24 L550.44 575.98 L550.90 576.82 L551.36 576.20 L551.82 575.74 L552.28 576.34 L552.74 576.55 L553.20 576.68 L553.66 576.84 L554.12 576.62 L554.58 576.67 L555.04 576.70 L555.50 576.63 L555.96 576.54 L556.42 576.76 L556.88 576.66 L557.34 576.70 L557.80 576.47 L558.26 576.54 L558.72 576.47 L559.18 576.52 L559.64 576.42 L560.10 576.57 L560.56 576.51 L561.02 576.57 L561.48 576.44 L561.95 576.22 L562.41 576.35 L562.87 576.63 L563.33 576.57 L563.79 576.15 L564.25 575.81 L564.71 575.93 L565.17 576.27 L565.63 575.83 L566.09 575.46 L566.55 575.55 L567.01 575.19 L567.47 574.53 L567.93 574.74 L568.39 574.42 L568.85 574.20 L569.31 575.85 L569.77 575.22 L570.23 574.52 L570.69 574.77 L571.15 575.23 L571.61 575.53 L572.07 575.44 L572.53 574.91 L572.99 575.02 L573.45 574.53 L573.91 574.51 L574.37 571.56 L574.83 573.50 L575.29 574.53 L575.75 573.73 L576.21 560.00 L576.67 566.02 L577.13 571.01 L577.59 565.77 L578.05 568.04 L578.52 570.59 L578.98 572.10 L579.44 567.13 L579.90 562.24 L580.36 573.35 L580.82 574.91 L581.28 572.79 L581.74 571.08 L582.20 573.17 L582.66 574.11 L583.12 572.06 L583.58 573.73 L584.04 573.63 L584.50 573.38 L584.96 572.90 L585.42 573.05 L585.88 573.11 L586.34 574.33 L586.80 575.14 L587.26 573.84 L587.72 572.87 L588.18 572.62 L588.64 574.06 L589.10 574.49 L589.56 574.14 L590.02 573.77 L590.48 574.22 L590.94 574.43 L591.40 573.78 L591.86 574.74 L592.32 573.06 L592.78 574.19 L593.24 574.10 L593.70 574.56 L594.16 575.18 L594.62 574.54 L595.08 574.88 L595.55 573.94 L596.01 574.11 L596.47 574.60 L596.93 575.08 L597.39 574.74 L597.85 574.47 L598.31 573.81 L598.77 572.45 L599.23 572.24 L599.69 573.82 L600.15 574.78 L600.61 573.34 L601.07 572.18 L601.53 573.46 L601.99 574.21 L602.45 572.47 L602.91 574.21 L603.37 575.45 L603.83 575.96 L604.29 574.01 L604.75 575.04 L605.21 574.87 L605.67 574.97 L606.13 575.14 L606.59 575.08 L607.05 574.40 L607.51 571.84 L607.97 573.82 L608.43 574.45 L608.89 573.20 L609.35 574.27 L609.81 575.46 L610.27 575.62 L610.73 573.88 L611.19 574.72 L611.65 575.45 L612.12 575.10 L612.58 575.02 L613.04 573.50 L613.50 574.19 L613.96 574.28 L614.42 574.60 L614.88 576.11 L615.34 575.76 L615.80 575.32 L616.26 574.93 L616.72 574.61 L617.18 575.21 L617.64 575.40 L618.10 575.13 L618.56 575.88 L619.02 575.51 L619.48 576.11 L619.94 574.80 L620.40 573.90 L620.86 574.46 L621.32 574.71 L621.78 574.46 L622.24 573.95 L622.70 575.71 L623.16 574.49 L623.62 574.34 L624.08 574.72 L624.54 575.23 L625.00 575.76 L625.46 575.90 L625.92 576.06 L626.38 576.23 L626.84 576.59 L627.30 575.24 L627.76 575.49 L628.22 576.56 L628.68 576.44 L629.15 576.86 L629.61 576.64 L630.07 575.28 L630.53 576.06 L630.99 576.15 L631.45 575.73 L631.91 576.67 L632.37 576.32 L632.83 575.89 L633.29 576.16 L633.75 576.54 L634.21 576.51 L634.67 576.49 L635.13 576.38 L635.59 576.39 L636.05 576.45 L636.51 576.65 L636.97 576.66 L637.43 576.75 L637.89 576.95 L638.35 576.47 L638.81 576.03 L639.27 576.37 L639.73 576.45 L640.19 576.46 L640.65 576.54 L641.11 576.37 L641.57 576.28 L642.03 576.17 L642.49 575.13 L642.95 576.07 L643.41 576.07 L643.87 576.02 L644.33 576.34 L644.79 575.77 L645.25 575.27 L645.72 575.84 L646.18 576.01 L646.64 576.44 L647.10 575.68 L647.56 575.06 L648.02 575.56 L648.48 576.09 L648.94 575.60 L649.40 575.04 L649.86 576.54 L650.32 576.91 L650.78 576.61 L651.24 575.65 L651.70 574.89 L652.16 576.39 L652.62 573.51 L653.08 570.69 L653.54 575.52 L654.00 575.68" fill="none" stroke="#026db3" stroke-width="1.6" stroke-linejoin="round"/><path d="M677.00 576.15 L677.46 576.29 L677.92 576.14 L678.38 576.01 L678.84 576.20 L679.30 576.27 L679.76 576.43 L680.22 575.77 L680.68 576.67 L681.14 576.82 L681.60 576.79 L682.06 576.24 L682.52 576.10 L682.98 574.80 L683.44 575.88 L683.90 576.15 L684.36 576.30 L684.82 576.10 L685.28 575.77 L685.75 576.33 L686.21 575.71 L686.67 575.80 L687.13 576.04 L687.59 575.53 L688.05 575.94 L688.51 575.84 L688.97 575.60 L689.43 576.05 L689.89 576.48 L690.35 575.92 L690.81 573.31 L691.27 574.56 L691.73 575.71 L692.19 574.42 L692.65 575.26 L693.11 575.96 L693.57 575.90 L694.03 575.54 L694.49 576.16 L694.95 576.57 L695.41 576.20 L695.87 575.85 L696.33 576.09 L696.79 575.44 L697.25 575.41 L697.71 574.36 L698.17 574.85 L698.63 575.34 L699.09 574.88 L699.55 576.02 L700.01 575.76 L700.47 576.09 L700.93 575.80 L701.39 574.89 L701.85 575.64 L702.32 576.62 L702.78 576.36 L703.24 576.41 L703.70 576.84 L704.16 576.03 L704.62 576.22 L705.08 575.81 L705.54 574.62 L706.00 575.87 L706.46 576.36 L706.92 576.54 L707.38 576.59 L707.84 575.53 L708.30 576.30 L708.76 575.46 L709.22 575.01 L709.68 575.91 L710.14 576.92 L710.60 576.68 L711.06 576.48 L711.52 576.68 L711.98 576.12 L712.44 576.59 L712.90 576.36 L713.36 575.48 L713.82 576.25 L714.28 576.22 L714.74 575.65 L715.20 576.56 L715.66 576.70 L716.12 576.50 L716.58 576.58 L717.04 576.15 L717.50 576.45 L717.96 576.45 L718.42 576.61 L718.88 576.54 L719.35 575.35 L719.81 576.14 L720.27 576.68 L720.73 576.76 L721.19 576.13 L721.65 576.70 L722.11 576.83 L722.57 576.84 L723.03 576.57 L723.49 576.46 L723.95 576.83 L724.41 576.37 L724.87 576.64 L725.33 576.77 L725.79 576.64 L726.25 576.69 L726.71 576.71 L727.17 576.45 L727.63 576.14 L728.09 576.52 L728.55 576.69 L729.01 576.85 L729.47 576.94 L729.93 576.91 L730.39 576.65 L730.85 576.48 L731.31 576.43 L731.77 576.90 L732.23 576.54 L732.69 576.51 L733.15 576.75 L733.61 576.80 L734.07 576.92 L734.53 577.00 L734.99 576.69 L735.45 576.59 L735.92 576.68 L736.38 576.67 L736.84 576.88 L737.30 576.35 L737.76 575.88 L738.22 576.07 L738.68 576.43 L739.14 576.60 L739.60 576.49 L740.06 576.18 L740.52 576.42 L740.98 576.25 L741.44 576.19 L741.90 576.88 L742.36 576.28 L742.82 575.83 L743.28 576.31 L743.74 576.77 L744.20 576.93 L744.66 576.84 L745.12 576.66 L745.58 576.61 L746.04 576.66 L746.50 576.67 L746.96 576.62 L747.42 576.62 L747.88 576.73 L748.34 576.73 L748.80 576.64 L749.26 576.56 L749.72 576.45 L750.18 576.55 L750.64 576.67 L751.10 576.64 L751.56 576.56 L752.02 576.51 L752.48 576.48 L752.95 576.37 L753.41 576.43 L753.87 576.49 L754.33 576.49 L754.79 576.21 L755.25 576.07 L755.71 576.03 L756.17 576.25 L756.63 575.89 L757.09 575.53 L757.55 575.45 L758.01 575.30 L758.47 574.65 L758.93 574.94 L759.39 574.37 L759.85 574.34 L760.31 575.92 L760.77 575.35 L761.23 574.67 L761.69 575.01 L762.15 575.26 L762.61 575.60 L763.07 575.39 L763.53 575.02 L763.99 574.99 L764.45 574.50 L764.91 574.43 L765.37 571.69 L765.83 573.53 L766.29 574.62 L766.75 573.78 L767.21 560.00 L767.67 565.83 L768.13 571.16 L768.59 565.77 L769.05 567.93 L769.52 570.48 L769.98 572.23 L770.44 567.01 L770.90 562.24 L771.36 573.35 L771.82 574.82 L772.28 572.97 L772.74 571.02 L773.20 573.22 L773.66 574.17 L774.12 572.10 L774.58 573.81 L775.04 573.76 L775.50 573.21 L775.96 572.77 L776.42 572.88 L776.88 573.20 L777.34 574.20 L777.80 575.05 L778.26 573.79 L778.72 572.85 L779.18 572.69 L779.64 574.12 L780.10 574.55 L780.56 574.20 L781.02 573.79 L781.48 574.09 L781.94 574.47 L782.40 573.74 L782.86 574.81 L783.32 572.98 L783.78 574.13 L784.24 574.07 L784.70 574.43 L785.16 575.19 L785.62 574.69 L786.08 574.77 L786.55 574.00 L787.01 574.32 L787.47 574.72 L787.93 575.20 L788.39 574.69 L788.85 574.52 L789.31 573.73 L789.77 572.29 L790.23 572.40 L790.69 573.78 L791.15 574.78 L791.61 573.57 L792.07 572.22 L792.53 573.49 L792.99 574.33 L793.45 572.63 L793.91 574.28 L794.37 575.51 L794.83 575.84 L795.29 574.12 L795.75 574.91 L796.21 575.01 L796.67 575.03 L797.13 575.19 L797.59 575.15 L798.05 574.51 L798.51 571.89 L798.97 573.80 L799.43 574.49 L799.89 573.32 L800.35 574.44 L800.81 575.50 L801.27 575.57 L801.73 574.06 L802.19 574.78 L802.65 575.38 L803.12 575.27 L803.58 574.93 L804.04 573.54 L804.50 574.21 L804.96 574.26 L805.42 574.58 L805.88 576.14 L806.34 575.88 L806.80 575.50 L807.26 575.11 L807.72 574.73 L808.18 575.30 L808.64 575.57 L809.10 575.28 L809.56 575.92 L810.02 575.64 L810.48 576.13 L810.94 574.88 L811.40 573.97 L811.86 574.38 L812.32 574.57 L812.78 574.36 L813.24 574.06 L813.70 575.69 L814.16 574.60 L814.62 574.48 L815.08 574.75 L815.54 575.19 L816.00 575.85 L816.46 576.01 L816.92 576.13 L817.38 576.38 L817.84 576.63 L818.30 575.39 L818.76 575.52 L819.22 576.57 L819.68 576.57 L820.15 576.82 L820.61 576.60 L821.07 575.25 L821.53 576.10 L821.99 575.92 L822.45 575.85 L822.91 576.64 L823.37 576.27 L823.83 575.85 L824.29 576.32 L824.75 576.69 L825.21 576.67 L825.67 576.62 L826.13 576.42 L826.59 576.46 L827.05 576.56 L827.51 576.66 L827.97 576.90 L828.43 576.78 L828.89 576.88 L829.35 576.61 L829.81 576.15 L830.27 576.33 L830.73 576.36 L831.19 576.46 L831.65 576.51 L832.11 576.48 L832.57 576.46 L833.03 576.20 L833.49 575.23 L833.95 576.20 L834.41 576.07 L834.87 575.97 L835.33 576.26 L835.79 575.80 L836.25 575.30 L836.72 576.15 L837.18 576.19 L837.64 576.53 L838.10 575.67 L838.56 574.95 L839.02 575.54 L839.48 576.13 L839.94 575.58 L840.40 575.13 L840.86 576.64 L841.32 576.82 L841.78 576.62 L842.24 575.86 L842.70 575.01 L843.16 576.48 L843.62 573.47 L844.08 570.83 L844.54 575.54 L845.00 575.72" fill="none" stroke="#026db3" stroke-width="1.6" stroke-linejoin="round"/><path d="M868.00 572.01 L868.46 571.02 L868.92 569.02 L869.38 571.29 L869.84 570.40 L870.30 571.79 L870.76 572.53 L871.22 570.10 L871.68 571.14 L872.14 570.72 L872.60 571.35 L873.06 570.67 L873.52 570.26 L873.98 570.17 L874.44 571.57 L874.90 571.63 L875.36 571.00 L875.82 571.16 L876.28 570.85 L876.75 571.94 L877.21 573.31 L877.67 570.95 L878.13 569.74 L878.59 569.97 L879.05 569.92 L879.51 570.61 L879.97 571.66 L880.43 570.50 L880.89 571.41 L881.35 570.27 L881.81 571.13 L882.27 570.95 L882.73 571.14 L883.19 571.29 L883.65 572.61 L884.11 570.41 L884.57 573.26 L885.03 570.91 L885.49 570.49 L885.95 569.59 L886.41 571.02 L886.87 571.94 L887.33 572.68 L887.79 569.68 L888.25 572.55 L888.71 570.57 L889.17 573.29 L889.63 571.38 L890.09 570.75 L890.55 571.06 L891.01 571.37 L891.47 572.03 L891.93 572.10 L892.39 566.38 L892.85 570.96 L893.32 571.47 L893.78 571.16 L894.24 569.00 L894.70 570.46 L895.16 560.00 L895.62 572.00 L896.08 571.25 L896.54 570.44 L897.00 569.36 L897.46 566.87 L897.92 570.05 L898.38 571.57 L898.84 570.50 L899.30 569.92 L899.76 572.39 L900.22 576.29 L900.68 571.46 L901.14 571.52 L901.60 570.73 L902.06 571.74 L902.52 572.52 L902.98 572.54 L903.44 571.35 L903.90 570.80 L904.36 571.35 L904.82 571.46 L905.28 571.36 L905.74 570.24 L906.20 570.88 L906.66 571.97 L907.12 571.58 L907.58 570.31 L908.04 570.02 L908.50 571.67 L908.96 571.35 L909.42 572.24 L909.88 570.57 L910.35 573.19 L910.81 570.10 L911.27 571.70 L911.73 572.40 L912.19 571.09 L912.65 572.79 L913.11 570.88 L913.57 570.68 L914.03 571.82 L914.49 571.66 L914.95 570.53 L915.41 571.90 L915.87 571.31 L916.33 569.03 L916.79 570.01 L917.25 571.76 L917.71 571.30 L918.17 570.37 L918.63 573.51 L919.09 571.56 L919.55 572.96 L920.01 572.90 L920.47 569.67 L920.93 568.05 L921.39 570.07 L921.85 571.54 L922.31 570.87 L922.77 571.70 L923.23 571.80 L923.69 571.40 L924.15 571.22 L924.61 570.03 L925.07 571.50 L925.53 571.01 L925.99 571.55 L926.45 571.21 L926.92 572.45 L927.38 570.41 L927.84 570.12 L928.30 571.30 L928.76 571.52 L929.22 570.50 L929.68 570.89 L930.14 571.32 L930.60 571.18 L931.06 571.04 L931.52 570.69 L931.98 570.90 L932.44 570.24 L932.90 569.96 L933.36 570.81 L933.82 572.46 L934.28 569.85 L934.74 569.51 L935.20 571.64 L935.66 571.69 L936.12 573.08 L936.58 570.67 L937.04 572.19 L937.50 569.78 L937.96 573.44 L938.42 571.27 L938.88 570.76 L939.34 571.68 L939.80 572.01 L940.26 571.12 L940.72 571.78 L941.18 571.63 L941.64 571.37 L942.10 571.81 L942.56 571.53 L943.02 570.41 L943.48 571.67 L943.95 571.19 L944.41 569.64 L944.87 570.56 L945.33 572.43 L945.79 570.29 L946.25 573.91 L946.71 572.11 L947.17 572.68 L947.63 570.47 L948.09 570.39 L948.55 572.45 L949.01 571.82 L949.47 570.20 L949.93 571.39 L950.39 570.87 L950.85 572.63 L951.31 570.53 L951.77 570.86 L952.23 569.39 L952.69 571.81 L953.15 570.85 L953.61 572.16 L954.07 570.29 L954.53 571.74 L954.99 571.66 L955.45 572.96 L955.91 571.71 L956.37 571.20 L956.83 570.19 L957.29 572.36 L957.75 570.53 L958.21 571.65 L958.67 571.61 L959.13 572.17 L959.59 572.81 L960.05 572.40 L960.52 569.98 L960.98 572.38 L961.44 571.74 L961.90 570.43 L962.36 573.17 L962.82 570.32 L963.28 571.81 L963.74 571.22 L964.20 570.64 L964.66 571.51 L965.12 571.55 L965.58 570.76 L966.04 570.84 L966.50 571.99 L966.96 570.67 L967.42 572.52 L967.88 570.28 L968.34 572.41 L968.80 571.22 L969.26 569.89 L969.72 567.90 L970.18 571.62 L970.64 571.99 L971.10 571.91 L971.56 568.72 L972.02 571.08 L972.48 570.27 L972.94 569.15 L973.40 572.07 L973.86 571.78 L974.32 569.85 L974.78 571.18 L975.24 571.10 L975.70 571.59 L976.16 570.73 L976.62 570.90 L977.08 571.62 L977.55 573.45 L978.01 570.69 L978.47 572.18 L978.93 571.93 L979.39 571.50 L979.85 572.43 L980.31 572.07 L980.77 571.33 L981.23 571.69 L981.69 571.13 L982.15 572.13 L982.61 571.60 L983.07 572.31 L983.53 571.65 L983.99 571.17 L984.45 571.62 L984.91 572.63 L985.37 571.57 L985.83 571.28 L986.29 569.88 L986.75 571.44 L987.21 571.76 L987.67 572.40 L988.13 569.71 L988.59 572.21 L989.05 572.36 L989.51 571.53 L989.97 572.95 L990.43 570.49 L990.89 571.25 L991.35 570.99 L991.81 571.40 L992.27 571.83 L992.73 570.67 L993.19 570.63 L993.65 568.99 L994.12 570.46 L994.58 573.00 L995.04 571.32 L995.50 571.70 L995.96 570.46 L996.42 571.46 L996.88 570.97 L997.34 571.66 L997.80 570.87 L998.26 570.14 L998.72 571.90 L999.18 573.11 L999.64 572.26 L1000.10 570.05 L1000.56 571.19 L1001.02 571.63 L1001.48 572.20 L1001.94 570.49 L1002.40 571.13 L1002.86 571.47 L1003.32 571.84 L1003.78 571.51 L1004.24 571.65 L1004.70 570.89 L1005.16 570.30 L1005.62 573.04 L1006.08 572.61 L1006.54 571.46 L1007.00 571.31 L1007.46 572.70 L1007.92 571.91 L1008.38 571.72 L1008.84 571.76 L1009.30 571.77 L1009.76 571.45 L1010.22 569.14 L1010.68 570.75 L1011.15 570.88 L1011.61 571.15 L1012.07 571.99 L1012.53 571.79 L1012.99 570.79 L1013.45 571.28 L1013.91 570.21 L1014.37 571.15 L1014.83 571.33 L1015.29 571.00 L1015.75 572.69 L1016.21 560.71 L1016.67 571.88 L1017.13 570.66 L1017.59 577.00 L1018.05 571.18 L1018.51 571.75 L1018.97 570.98 L1019.43 570.77 L1019.89 571.56 L1020.35 571.30 L1020.81 571.24 L1021.27 570.73 L1021.73 571.67 L1022.19 571.35 L1022.65 571.75 L1023.11 572.21 L1023.57 571.24 L1024.03 571.03 L1024.49 570.67 L1024.95 568.64 L1025.41 570.61 L1025.87 569.34 L1026.33 569.66 L1026.79 571.43 L1027.25 570.00 L1027.72 571.32 L1028.18 570.07 L1028.64 569.41 L1029.10 568.41 L1029.56 569.32 L1030.02 571.28 L1030.48 570.28 L1030.94 568.71 L1031.40 569.83 L1031.86 568.48 L1032.32 570.60 L1032.78 570.46 L1033.24 571.13 L1033.70 570.31 L1034.16 568.92 L1034.62 570.78 L1035.08 569.27 L1035.54 569.59 L1036.00 569.31 L1036.00 577.50 L868.00 577.50 Z" fill="#dbeaf4"/><path d="M868.00 572.01 L868.46 571.02 L868.92 569.02 L869.38 571.29 L869.84 570.40 L870.30 571.79 L870.76 572.53 L871.22 570.10 L871.68 571.14 L872.14 570.72 L872.60 571.35 L873.06 570.67 L873.52 570.26 L873.98 570.17 L874.44 571.57 L874.90 571.63 L875.36 571.00 L875.82 571.16 L876.28 570.85 L876.75 571.94 L877.21 573.31 L877.67 570.95 L878.13 569.74 L878.59 569.97 L879.05 569.92 L879.51 570.61 L879.97 571.66 L880.43 570.50 L880.89 571.41 L881.35 570.27 L881.81 571.13 L882.27 570.95 L882.73 571.14 L883.19 571.29 L883.65 572.61 L884.11 570.41 L884.57 573.26 L885.03 570.91 L885.49 570.49 L885.95 569.59 L886.41 571.02 L886.87 571.94 L887.33 572.68 L887.79 569.68 L888.25 572.55 L888.71 570.57 L889.17 573.29 L889.63 571.38 L890.09 570.75 L890.55 571.06 L891.01 571.37 L891.47 572.03 L891.93 572.10 L892.39 566.38 L892.85 570.96 L893.32 571.47 L893.78 571.16 L894.24 569.00 L894.70 570.46 L895.16 560.00 L895.62 572.00 L896.08 571.25 L896.54 570.44 L897.00 569.36 L897.46 566.87 L897.92 570.05 L898.38 571.57 L898.84 570.50 L899.30 569.92 L899.76 572.39 L900.22 576.29 L900.68 571.46 L901.14 571.52 L901.60 570.73 L902.06 571.74 L902.52 572.52 L902.98 572.54 L903.44 571.35 L903.90 570.80 L904.36 571.35 L904.82 571.46 L905.28 571.36 L905.74 570.24 L906.20 570.88 L906.66 571.97 L907.12 571.58 L907.58 570.31 L908.04 570.02 L908.50 571.67 L908.96 571.35 L909.42 572.24 L909.88 570.57 L910.35 573.19 L910.81 570.10 L911.27 571.70 L911.73 572.40 L912.19 571.09 L912.65 572.79 L913.11 570.88 L913.57 570.68 L914.03 571.82 L914.49 571.66 L914.95 570.53 L915.41 571.90 L915.87 571.31 L916.33 569.03 L916.79 570.01 L917.25 571.76 L917.71 571.30 L918.17 570.37 L918.63 573.51 L919.09 571.56 L919.55 572.96 L920.01 572.90 L920.47 569.67 L920.93 568.05 L921.39 570.07 L921.85 571.54 L922.31 570.87 L922.77 571.70 L923.23 571.80 L923.69 571.40 L924.15 571.22 L924.61 570.03 L925.07 571.50 L925.53 571.01 L925.99 571.55 L926.45 571.21 L926.92 572.45 L927.38 570.41 L927.84 570.12 L928.30 571.30 L928.76 571.52 L929.22 570.50 L929.68 570.89 L930.14 571.32 L930.60 571.18 L931.06 571.04 L931.52 570.69 L931.98 570.90 L932.44 570.24 L932.90 569.96 L933.36 570.81 L933.82 572.46 L934.28 569.85 L934.74 569.51 L935.20 571.64 L935.66 571.69 L936.12 573.08 L936.58 570.67 L937.04 572.19 L937.50 569.78 L937.96 573.44 L938.42 571.27 L938.88 570.76 L939.34 571.68 L939.80 572.01 L940.26 571.12 L940.72 571.78 L941.18 571.63 L941.64 571.37 L942.10 571.81 L942.56 571.53 L943.02 570.41 L943.48 571.67 L943.95 571.19 L944.41 569.64 L944.87 570.56 L945.33 572.43 L945.79 570.29 L946.25 573.91 L946.71 572.11 L947.17 572.68 L947.63 570.47 L948.09 570.39 L948.55 572.45 L949.01 571.82 L949.47 570.20 L949.93 571.39 L950.39 570.87 L950.85 572.63 L951.31 570.53 L951.77 570.86 L952.23 569.39 L952.69 571.81 L953.15 570.85 L953.61 572.16 L954.07 570.29 L954.53 571.74 L954.99 571.66 L955.45 572.96 L955.91 571.71 L956.37 571.20 L956.83 570.19 L957.29 572.36 L957.75 570.53 L958.21 571.65 L958.67 571.61 L959.13 572.17 L959.59 572.81 L960.05 572.40 L960.52 569.98 L960.98 572.38 L961.44 571.74 L961.90 570.43 L962.36 573.17 L962.82 570.32 L963.28 571.81 L963.74 571.22 L964.20 570.64 L964.66 571.51 L965.12 571.55 L965.58 570.76 L966.04 570.84 L966.50 571.99 L966.96 570.67 L967.42 572.52 L967.88 570.28 L968.34 572.41 L968.80 571.22 L969.26 569.89 L969.72 567.90 L970.18 571.62 L970.64 571.99 L971.10 571.91 L971.56 568.72 L972.02 571.08 L972.48 570.27 L972.94 569.15 L973.40 572.07 L973.86 571.78 L974.32 569.85 L974.78 571.18 L975.24 571.10 L975.70 571.59 L976.16 570.73 L976.62 570.90 L977.08 571.62 L977.55 573.45 L978.01 570.69 L978.47 572.18 L978.93 571.93 L979.39 571.50 L979.85 572.43 L980.31 572.07 L980.77 571.33 L981.23 571.69 L981.69 571.13 L982.15 572.13 L982.61 571.60 L983.07 572.31 L983.53 571.65 L983.99 571.17 L984.45 571.62 L984.91 572.63 L985.37 571.57 L985.83 571.28 L986.29 569.88 L986.75 571.44 L987.21 571.76 L987.67 572.40 L988.13 569.71 L988.59 572.21 L989.05 572.36 L989.51 571.53 L989.97 572.95 L990.43 570.49 L990.89 571.25 L991.35 570.99 L991.81 571.40 L992.27 571.83 L992.73 570.67 L993.19 570.63 L993.65 568.99 L994.12 570.46 L994.58 573.00 L995.04 571.32 L995.50 571.70 L995.96 570.46 L996.42 571.46 L996.88 570.97 L997.34 571.66 L997.80 570.87 L998.26 570.14 L998.72 571.90 L999.18 573.11 L999.64 572.26 L1000.10 570.05 L1000.56 571.19 L1001.02 571.63 L1001.48 572.20 L1001.94 570.49 L1002.40 571.13 L1002.86 571.47 L1003.32 571.84 L1003.78 571.51 L1004.24 571.65 L1004.70 570.89 L1005.16 570.30 L1005.62 573.04 L1006.08 572.61 L1006.54 571.46 L1007.00 571.31 L1007.46 572.70 L1007.92 571.91 L1008.38 571.72 L1008.84 571.76 L1009.30 571.77 L1009.76 571.45 L1010.22 569.14 L1010.68 570.75 L1011.15 570.88 L1011.61 571.15 L1012.07 571.99 L1012.53 571.79 L1012.99 570.79 L1013.45 571.28 L1013.91 570.21 L1014.37 571.15 L1014.83 571.33 L1015.29 571.00 L1015.75 572.69 L1016.21 560.71 L1016.67 571.88 L1017.13 570.66 L1017.59 577.00 L1018.05 571.18 L1018.51 571.75 L1018.97 570.98 L1019.43 570.77 L1019.89 571.56 L1020.35 571.30 L1020.81 571.24 L1021.27 570.73 L1021.73 571.67 L1022.19 571.35 L1022.65 571.75 L1023.11 572.21 L1023.57 571.24 L1024.03 571.03 L1024.49 570.67 L1024.95 568.64 L1025.41 570.61 L1025.87 569.34 L1026.33 569.66 L1026.79 571.43 L1027.25 570.00 L1027.72 571.32 L1028.18 570.07 L1028.64 569.41 L1029.10 568.41 L1029.56 569.32 L1030.02 571.28 L1030.48 570.28 L1030.94 568.71 L1031.40 569.83 L1031.86 568.48 L1032.32 570.60 L1032.78 570.46 L1033.24 571.13 L1033.70 570.31 L1034.16 568.92 L1034.62 570.78 L1035.08 569.27 L1035.54 569.59 L1036.00 569.31" fill="none" stroke="#026db3" stroke-width="1.6" stroke-linejoin="round"/><path d="M1059.00 574.99 L1059.46 575.84 L1059.92 575.60 L1060.38 574.80 L1060.84 575.29 L1061.30 575.35 L1061.76 575.59 L1062.22 574.94 L1062.68 576.28 L1063.14 576.16 L1063.60 576.42 L1064.06 575.26 L1064.52 575.05 L1064.98 573.52 L1065.44 574.61 L1065.90 575.28 L1066.36 575.12 L1066.82 575.25 L1067.28 574.41 L1067.75 575.56 L1068.21 574.38 L1068.67 574.58 L1069.13 574.87 L1069.59 574.52 L1070.05 575.13 L1070.51 575.22 L1070.97 574.29 L1071.43 575.37 L1071.89 575.50 L1072.35 575.05 L1072.81 571.81 L1073.27 572.81 L1073.73 574.65 L1074.19 573.36 L1074.65 573.75 L1075.11 575.32 L1075.57 574.91 L1076.03 574.29 L1076.49 575.21 L1076.95 575.71 L1077.41 575.70 L1077.87 575.00 L1078.33 575.00 L1078.79 574.08 L1079.25 574.23 L1079.71 573.08 L1080.17 573.71 L1080.63 573.97 L1081.09 573.73 L1081.55 574.83 L1082.01 574.84 L1082.47 575.16 L1082.93 575.04 L1083.39 573.44 L1083.85 574.35 L1084.32 576.08 L1084.78 575.67 L1085.24 575.82 L1085.70 576.15 L1086.16 574.83 L1086.62 575.52 L1087.08 574.41 L1087.54 573.00 L1088.00 574.76 L1088.46 575.29 L1088.92 575.79 L1089.38 575.88 L1089.84 574.24 L1090.30 575.78 L1090.76 574.43 L1091.22 573.65 L1091.68 574.63 L1092.14 577.00 L1092.60 576.33 L1093.06 576.01 L1093.52 575.94 L1093.98 575.27 L1094.44 575.81 L1094.90 575.39 L1095.36 574.43 L1095.82 575.11 L1096.28 575.11 L1096.74 574.82 L1097.20 576.18 L1097.66 576.39 L1098.12 575.58 L1098.58 576.32 L1099.04 574.98 L1099.50 575.86 L1099.96 575.77 L1100.42 576.16 L1100.88 575.82 L1101.35 574.04 L1101.81 574.93 L1102.27 576.24 L1102.73 576.42 L1103.19 575.17 L1103.65 576.47 L1104.11 576.47 L1104.57 576.77 L1105.03 575.86 L1105.49 575.45 L1105.95 576.38 L1106.41 575.67 L1106.87 576.54 L1107.33 576.58 L1107.79 575.85 L1108.25 576.48 L1108.71 576.49 L1109.17 576.15 L1109.63 575.25 L1110.09 575.80 L1110.55 576.60 L1111.01 576.82 L1111.47 576.72 L1111.93 576.44 L1112.39 576.27 L1112.85 576.01 L1113.31 576.06 L1113.77 576.41 L1114.23 575.51 L1114.69 576.08 L1115.15 575.96 L1115.61 576.62 L1116.07 576.65 L1116.53 576.68 L1116.99 575.99 L1117.45 576.31 L1117.92 575.80 L1118.38 576.20 L1118.84 576.74 L1119.30 576.03 L1119.76 575.07 L1120.22 575.57 L1120.68 575.44 L1121.14 576.38 L1121.60 575.69 L1122.06 575.31 L1122.52 575.94 L1122.98 575.52 L1123.44 575.35 L1123.90 576.43 L1124.36 575.49 L1124.82 574.97 L1125.28 575.80 L1125.74 576.29 L1126.20 576.52 L1126.66 576.13 L1127.12 576.55 L1127.58 576.34 L1128.04 576.15 L1128.50 575.90 L1128.96 576.15 L1129.42 576.21 L1129.88 575.96 L1130.34 576.74 L1130.80 576.51 L1131.26 576.24 L1131.72 575.76 L1132.18 576.15 L1132.64 576.16 L1133.10 576.07 L1133.56 576.10 L1134.02 576.04 L1134.48 575.47 L1134.95 575.78 L1135.41 576.16 L1135.87 575.75 L1136.33 575.60 L1136.79 575.69 L1137.25 575.08 L1137.71 575.42 L1138.17 575.70 L1138.63 574.67 L1139.09 574.51 L1139.55 574.38 L1140.01 574.30 L1140.47 573.48 L1140.93 573.87 L1141.39 573.36 L1141.85 572.71 L1142.31 574.82 L1142.77 574.46 L1143.23 573.52 L1143.69 573.33 L1144.15 573.86 L1144.61 574.67 L1145.07 573.83 L1145.53 573.72 L1145.99 573.69 L1146.45 573.45 L1146.91 573.30 L1147.37 570.32 L1147.83 572.29 L1148.29 573.32 L1148.75 572.17 L1149.21 561.00 L1149.67 565.27 L1150.13 569.34 L1150.59 565.07 L1151.05 566.50 L1151.52 569.12 L1151.98 570.78 L1152.44 565.87 L1152.90 562.68 L1153.36 571.49 L1153.82 573.72 L1154.28 571.10 L1154.74 569.56 L1155.20 571.49 L1155.66 572.90 L1156.12 570.36 L1156.58 572.43 L1157.04 572.12 L1157.50 571.84 L1157.96 571.59 L1158.42 571.06 L1158.88 571.89 L1159.34 573.05 L1159.80 573.42 L1160.26 572.07 L1160.72 571.53 L1161.18 571.33 L1161.64 572.69 L1162.10 573.45 L1162.56 572.75 L1163.02 571.91 L1163.48 572.47 L1163.94 573.04 L1164.40 572.44 L1164.86 573.46 L1165.32 571.18 L1165.78 572.43 L1166.24 572.55 L1166.70 572.97 L1167.16 573.75 L1167.62 573.60 L1168.08 573.81 L1168.55 572.38 L1169.01 572.79 L1169.47 573.14 L1169.93 574.11 L1170.39 573.21 L1170.85 573.22 L1171.31 572.05 L1171.77 571.09 L1172.23 570.82 L1172.69 571.98 L1173.15 573.85 L1173.61 572.12 L1174.07 570.82 L1174.53 572.00 L1174.99 572.80 L1175.45 571.01 L1175.91 572.63 L1176.37 574.39 L1176.83 575.07 L1177.29 572.47 L1177.75 573.70 L1178.21 573.97 L1178.67 573.95 L1179.13 573.60 L1179.59 573.51 L1180.05 572.98 L1180.51 570.52 L1180.97 572.32 L1181.43 572.74 L1181.89 571.89 L1182.35 573.15 L1182.81 574.45 L1183.27 574.48 L1183.73 572.85 L1184.19 573.64 L1184.65 574.55 L1185.12 574.03 L1185.58 573.93 L1186.04 572.18 L1186.50 572.88 L1186.96 572.85 L1187.42 573.31 L1187.88 575.29 L1188.34 575.18 L1188.80 574.66 L1189.26 573.88 L1189.72 573.36 L1190.18 573.66 L1190.64 574.75 L1191.10 573.76 L1191.56 575.22 L1192.02 574.57 L1192.48 575.07 L1192.94 573.36 L1193.40 572.66 L1193.86 572.82 L1194.32 573.58 L1194.78 573.04 L1195.24 572.32 L1195.70 574.41 L1196.16 573.28 L1196.62 573.24 L1197.08 573.53 L1197.54 574.02 L1198.00 574.61 L1198.46 575.31 L1198.92 574.95 L1199.38 575.40 L1199.84 576.26 L1200.30 574.05 L1200.76 574.08 L1201.22 575.97 L1201.68 576.14 L1202.15 576.52 L1202.61 576.14 L1203.07 573.98 L1203.53 575.09 L1203.99 574.81 L1204.45 574.88 L1204.91 575.74 L1205.37 575.58 L1205.83 575.17 L1206.29 575.81 L1206.75 576.14 L1207.21 575.92 L1207.67 576.23 L1208.13 575.47 L1208.59 576.03 L1209.05 575.54 L1209.51 576.28 L1209.97 576.44 L1210.43 576.33 L1210.89 576.71 L1211.35 576.06 L1211.81 575.60 L1212.27 575.28 L1212.73 575.69 L1213.19 575.72 L1213.65 575.89 L1214.11 575.51 L1214.57 575.71 L1215.03 575.38 L1215.49 573.84 L1215.95 575.17 L1216.41 575.12 L1216.87 575.36 L1217.33 575.17 L1217.79 575.07 L1218.25 574.10 L1218.72 575.01 L1219.18 575.55 L1219.64 575.98 L1220.10 574.88 L1220.56 573.95 L1221.02 574.35 L1221.48 575.44 L1221.94 574.83 L1222.40 573.57 L1222.86 576.21 L1223.32 576.37 L1223.78 575.88 L1224.24 574.78 L1224.70 573.86 L1225.16 575.80 L1225.62 571.65 L1226.08 569.33 L1226.54 574.59 L1227.00 574.80" fill="none" stroke="#026db3" stroke-width="1.6" stroke-linejoin="round"/><path d="M1250.00 574.48 L1250.46 576.52 L1250.92 573.96 L1251.38 573.08 L1251.84 573.19 L1252.30 572.50 L1252.76 574.10 L1253.22 574.24 L1253.68 574.42 L1254.14 575.01 L1254.60 575.44 L1255.06 575.06 L1255.52 574.31 L1255.98 574.83 L1256.44 574.09 L1256.90 574.12 L1257.36 573.48 L1257.82 574.80 L1258.28 576.58 L1258.75 575.31 L1259.21 572.02 L1259.67 573.35 L1260.13 574.68 L1260.59 574.44 L1261.05 571.34 L1261.51 574.75 L1261.97 573.98 L1262.43 573.42 L1262.89 572.81 L1263.35 574.62 L1263.81 574.54 L1264.27 574.59 L1264.73 574.17 L1265.19 572.99 L1265.65 575.07 L1266.11 571.68 L1266.57 573.57 L1267.03 572.94 L1267.49 575.24 L1267.95 574.63 L1268.41 574.80 L1268.87 574.15 L1269.33 576.53 L1269.79 572.73 L1270.25 574.77 L1270.71 573.77 L1271.17 573.03 L1271.63 574.26 L1272.09 574.39 L1272.55 574.38 L1273.01 574.44 L1273.47 573.88 L1273.93 573.14 L1274.39 573.43 L1274.85 568.99 L1275.32 574.05 L1275.78 574.74 L1276.24 574.68 L1276.70 575.56 L1277.16 574.58 L1277.62 574.81 L1278.08 572.09 L1278.54 573.53 L1279.00 572.07 L1279.46 576.30 L1279.92 573.77 L1280.38 572.94 L1280.84 573.74 L1281.30 574.64 L1281.76 573.91 L1282.22 573.99 L1282.68 573.95 L1283.14 573.80 L1283.60 573.02 L1284.06 573.84 L1284.52 573.77 L1284.98 574.07 L1285.44 573.57 L1285.90 574.90 L1286.36 573.42 L1286.82 574.45 L1287.28 573.10 L1287.74 574.74 L1288.20 574.13 L1288.66 574.27 L1289.12 566.00 L1289.58 572.87 L1290.04 573.64 L1290.50 574.02 L1290.96 572.66 L1291.42 574.44 L1291.88 574.09 L1292.35 572.81 L1292.81 571.29 L1293.27 573.97 L1293.73 568.95 L1294.19 573.86 L1294.65 574.97 L1295.11 573.49 L1295.57 572.65 L1296.03 573.84 L1296.49 573.53 L1296.95 574.96 L1297.41 576.65 L1297.87 563.85 L1298.33 575.72 L1298.79 574.19 L1299.25 574.87 L1299.71 573.97 L1300.17 573.18 L1300.63 576.08 L1301.09 574.36 L1301.55 574.36 L1302.01 572.67 L1302.47 574.13 L1302.93 575.14 L1303.39 573.67 L1303.85 572.17 L1304.31 575.22 L1304.77 574.16 L1305.23 561.00 L1305.69 572.45 L1306.15 574.51 L1306.61 573.01 L1307.07 575.24 L1307.53 573.47 L1307.99 573.97 L1308.45 576.36 L1308.92 571.48 L1309.38 575.72 L1309.84 575.29 L1310.30 572.38 L1310.76 573.68 L1311.22 574.29 L1311.68 572.51 L1312.14 574.29 L1312.60 573.81 L1313.06 574.85 L1313.52 574.34 L1313.98 570.84 L1314.44 572.95 L1314.90 574.92 L1315.36 574.43 L1315.82 576.67 L1316.28 576.15 L1316.74 572.09 L1317.20 574.65 L1317.66 574.61 L1318.12 573.52 L1318.58 574.59 L1319.04 571.29 L1319.50 574.54 L1319.96 576.51 L1320.42 573.53 L1320.88 572.54 L1321.34 572.89 L1321.80 574.16 L1322.26 573.93 L1322.72 569.94 L1323.18 572.52 L1323.64 572.88 L1324.10 574.63 L1324.56 574.39 L1325.02 574.48 L1325.48 574.91 L1325.95 574.95 L1326.41 574.41 L1326.87 577.00 L1327.33 573.85 L1327.79 574.80 L1328.25 575.66 L1328.71 574.50 L1329.17 575.14 L1329.63 569.70 L1330.09 575.55 L1330.55 574.22 L1331.01 573.91 L1331.47 575.24 L1331.93 575.69 L1332.39 573.87 L1332.85 574.75 L1333.31 575.36 L1333.77 573.99 L1334.23 573.61 L1334.69 572.60 L1335.15 574.89 L1335.61 573.70 L1336.07 573.06 L1336.53 573.16 L1336.99 574.15 L1337.45 573.68 L1337.91 573.50 L1338.37 568.25 L1338.83 574.02 L1339.29 573.08 L1339.75 573.33 L1340.21 573.51 L1340.67 575.34 L1341.13 573.90 L1341.59 572.54 L1342.05 574.63 L1342.52 570.59 L1342.98 575.08 L1343.44 573.90 L1343.90 572.23 L1344.36 573.42 L1344.82 573.73 L1345.28 574.67 L1345.74 574.82 L1346.20 573.89 L1346.66 573.99 L1347.12 571.69 L1347.58 574.89 L1348.04 573.42 L1348.50 574.80 L1348.96 574.71 L1349.42 572.99 L1349.88 573.72 L1350.34 573.60 L1350.80 575.68 L1351.26 571.31 L1351.72 571.88 L1352.18 574.98 L1352.64 573.68 L1353.10 574.98 L1353.56 573.25 L1354.02 575.22 L1354.48 573.88 L1354.94 574.91 L1355.40 571.13 L1355.86 574.44 L1356.32 574.69 L1356.78 571.97 L1357.24 573.82 L1357.70 574.18 L1358.16 570.47 L1358.62 573.56 L1359.08 574.67 L1359.55 574.06 L1360.01 570.92 L1360.47 575.68 L1360.93 574.55 L1361.39 572.01 L1361.85 572.43 L1362.31 573.94 L1362.77 574.57 L1363.23 574.05 L1363.69 573.53 L1364.15 575.57 L1364.61 574.66 L1365.07 576.58 L1365.53 576.13 L1365.99 575.01 L1366.45 574.34 L1366.91 574.14 L1367.37 574.05 L1367.83 572.74 L1368.29 573.69 L1368.75 569.93 L1369.21 574.54 L1369.67 572.04 L1370.13 572.75 L1370.59 574.83 L1371.05 574.82 L1371.51 573.32 L1371.97 573.07 L1372.43 570.69 L1372.89 572.93 L1373.35 575.49 L1373.81 574.35 L1374.27 573.05 L1374.73 574.80 L1375.19 572.78 L1375.65 573.82 L1376.12 574.45 L1376.58 576.24 L1377.04 574.52 L1377.50 573.97 L1377.96 573.94 L1378.42 569.98 L1378.88 573.12 L1379.34 574.55 L1379.80 574.40 L1380.26 572.29 L1380.72 573.17 L1381.18 574.12 L1381.64 573.23 L1382.10 572.96 L1382.56 572.96 L1383.02 574.23 L1383.48 573.63 L1383.94 574.09 L1384.40 574.17 L1384.86 572.06 L1385.32 575.55 L1385.78 571.26 L1386.24 575.30 L1386.70 574.91 L1387.16 573.19 L1387.62 575.59 L1388.08 575.18 L1388.54 575.40 L1389.00 574.80 L1389.46 573.80 L1389.92 572.85 L1390.38 574.87 L1390.84 571.84 L1391.30 571.66 L1391.76 571.78 L1392.22 574.66 L1392.68 574.70 L1393.15 573.88 L1393.61 573.35 L1394.07 574.37 L1394.53 576.08 L1394.99 573.25 L1395.45 573.41 L1395.91 574.65 L1396.37 575.51 L1396.83 573.92 L1397.29 572.97 L1397.75 576.16 L1398.21 575.47 L1398.67 572.92 L1399.13 575.13 L1399.59 574.61 L1400.05 572.91 L1400.51 573.36 L1400.97 573.36 L1401.43 573.13 L1401.89 573.21 L1402.35 574.93 L1402.81 573.41 L1403.27 573.88 L1403.73 572.97 L1404.19 573.73 L1404.65 574.98 L1405.11 572.09 L1405.57 575.73 L1406.03 573.32 L1406.49 573.53 L1406.95 573.19 L1407.41 572.66 L1407.87 573.67 L1408.33 573.85 L1408.79 574.54 L1409.25 573.36 L1409.72 573.79 L1410.18 573.33 L1410.64 575.49 L1411.10 575.92 L1411.56 570.18 L1412.02 573.63 L1412.48 575.93 L1412.94 575.35 L1413.40 574.61 L1413.86 573.89 L1414.32 573.86 L1414.78 573.11 L1415.24 574.40 L1415.70 573.74 L1416.16 572.78 L1416.62 574.51 L1417.08 571.68 L1417.54 574.61 L1418.00 572.45" fill="none" stroke="#026db3" stroke-width="1.6" stroke-linejoin="round"/><path d="M295.00 677.00 L295.46 677.89 L295.92 677.66 L296.38 677.83 L296.84 677.58 L297.30 678.14 L297.76 675.88 L298.22 677.15 L298.68 676.72 L299.14 677.66 L299.60 676.26 L300.06 677.36 L300.52 678.32 L300.98 678.38 L301.44 677.85 L301.90 677.14 L302.36 675.80 L302.82 677.30 L303.28 677.71 L303.75 677.82 L304.21 677.56 L304.67 677.52 L305.13 677.09 L305.59 677.24 L306.05 677.41 L306.51 675.60 L306.97 678.01 L307.43 677.68 L307.89 678.47 L308.35 677.81 L308.81 677.81 L309.27 677.63 L309.73 677.34 L310.19 678.33 L310.65 678.24 L311.11 677.90 L311.57 677.14 L312.03 674.78 L312.49 675.38 L312.95 678.19 L313.41 677.91 L313.87 677.54 L314.33 678.00 L314.79 678.02 L315.25 678.14 L315.71 677.42 L316.17 676.32 L316.63 677.70 L317.09 677.74 L317.55 676.92 L318.01 677.24 L318.47 677.30 L318.93 678.12 L319.39 676.79 L319.85 678.41 L320.32 677.48 L320.78 677.75 L321.24 678.20 L321.70 677.84 L322.16 677.18 L322.62 676.65 L323.08 676.03 L323.54 675.88 L324.00 676.60 L324.46 675.37 L324.92 676.28 L325.38 675.76 L325.84 675.81 L326.30 676.80 L326.76 677.43 L327.22 677.97 L327.68 674.14 L328.14 675.90 L328.60 672.32 L329.06 677.74 L329.52 675.81 L329.98 677.83 L330.44 673.75 L330.90 678.03 L331.36 675.52 L331.82 676.77 L332.28 675.48 L332.74 675.64 L333.20 674.65 L333.66 676.69 L334.12 675.18 L334.58 677.25 L335.04 671.29 L335.50 676.21 L335.96 671.00 L336.42 678.11 L336.88 676.67 L337.35 674.07 L337.81 676.65 L338.27 676.50 L338.73 677.02 L339.19 678.02 L339.65 675.25 L340.11 675.56 L340.57 676.89 L341.03 671.81 L341.49 677.53 L341.95 676.12 L342.41 676.57 L342.87 675.76 L343.33 676.89 L343.79 677.58 L344.25 677.44 L344.71 676.28 L345.17 676.85 L345.63 667.68 L346.09 675.61 L346.55 678.09 L347.01 676.52 L347.47 675.14 L347.93 677.93 L348.39 678.22 L348.85 676.14 L349.31 677.08 L349.77 676.10 L350.23 661.50 L350.69 674.63 L351.15 675.64 L351.61 677.70 L352.07 675.37 L352.53 675.31 L352.99 674.48 L353.45 674.26 L353.92 677.21 L354.38 675.09 L354.84 677.87 L355.30 677.13 L355.76 678.08 L356.22 677.84 L356.68 678.11 L357.14 677.97 L357.60 677.74 L358.06 675.58 L358.52 678.35 L358.98 678.36 L359.44 677.63 L359.90 677.38 L360.36 676.68 L360.82 676.89 L361.28 677.74 L361.74 676.34 L362.20 678.40 L362.66 678.39 L363.12 678.02 L363.58 677.28 L364.04 677.93 L364.50 676.82 L364.96 677.69 L365.42 678.31 L365.88 677.79 L366.34 678.48 L366.80 677.10 L367.26 676.98 L367.72 678.07 L368.18 676.73 L368.64 677.51 L369.10 677.81 L369.56 677.16 L370.02 677.98 L370.48 676.89 L370.95 675.20 L371.41 677.43 L371.87 677.57 L372.33 678.30 L372.79 676.20 L373.25 676.59 L373.71 676.80 L374.17 678.44 L374.63 677.83 L375.09 677.39 L375.55 678.00 L376.01 677.78 L376.47 676.60 L376.93 677.20 L377.39 676.09 L377.85 676.75 L378.31 677.08 L378.77 676.37 L379.23 677.16 L379.69 677.42 L380.15 678.43 L380.61 677.26 L381.07 674.21 L381.53 677.10 L381.99 676.94 L382.45 677.74 L382.91 678.45 L383.37 678.36 L383.83 678.32 L384.29 677.74 L384.75 676.21 L385.21 677.31 L385.67 677.70 L386.13 678.14 L386.59 677.41 L387.05 677.76 L387.52 678.09 L387.98 677.94 L388.44 677.24 L388.90 676.27 L389.36 678.14 L389.82 677.87 L390.28 678.06 L390.74 677.23 L391.20 676.62 L391.66 677.22 L392.12 676.47 L392.58 676.40 L393.04 675.82 L393.50 677.68 L393.96 676.97 L394.42 677.68 L394.88 678.14 L395.34 677.01 L395.80 676.46 L396.26 678.29 L396.72 676.44 L397.18 677.74 L397.64 677.41 L398.10 676.87 L398.56 678.10 L399.02 678.04 L399.48 678.48 L399.94 678.06 L400.40 678.05 L400.86 676.11 L401.32 677.57 L401.78 678.34 L402.24 676.97 L402.70 677.59 L403.16 676.05 L403.62 677.08 L404.08 677.00 L404.55 677.80 L405.01 677.70 L405.47 676.69 L405.93 678.12 L406.39 678.29 L406.85 678.44 L407.31 677.64 L407.77 677.83 L408.23 677.33 L408.69 678.00 L409.15 677.74 L409.61 677.06 L410.07 678.14 L410.53 677.35 L410.99 677.39 L411.45 677.26 L411.91 678.28 L412.37 675.79 L412.83 678.22 L413.29 677.53 L413.75 676.92 L414.21 674.63 L414.67 677.60 L415.13 677.61 L415.59 677.81 L416.05 676.60 L416.51 678.32 L416.97 677.05 L417.43 677.75 L417.89 677.27 L418.35 678.17 L418.81 676.91 L419.27 675.60 L419.73 677.21 L420.19 678.03 L420.65 677.68 L421.12 677.35 L421.58 678.44 L422.04 678.20 L422.50 677.90 L422.96 677.94 L423.42 675.76 L423.88 677.90 L424.34 675.86 L424.80 678.09 L425.26 677.43 L425.72 678.12 L426.18 677.87 L426.64 678.02 L427.10 677.48 L427.56 677.80 L428.02 677.82 L428.48 678.06 L428.94 676.90 L429.40 678.50 L429.86 678.28 L430.32 678.44 L430.78 677.74 L431.24 677.81 L431.70 678.12 L432.16 678.08 L432.62 678.14 L433.08 678.32 L433.54 677.77 L434.00 676.73 L434.46 676.57 L434.92 677.17 L435.38 678.39 L435.84 677.13 L436.30 677.85 L436.76 678.39 L437.22 677.85 L437.68 678.21 L438.15 677.48 L438.61 678.09 L439.07 673.10 L439.53 676.43 L439.99 678.22 L440.45 678.13 L440.91 677.92 L441.37 678.44 L441.83 677.41 L442.29 678.03 L442.75 677.97 L443.21 677.59 L443.67 678.06 L444.13 678.01 L444.59 678.38 L445.05 677.41 L445.51 677.64 L445.97 677.49 L446.43 678.07 L446.89 677.14 L447.35 677.68 L447.81 677.19 L448.27 676.44 L448.73 678.07 L449.19 678.07 L449.65 677.57 L450.11 676.68 L450.57 672.32 L451.03 677.21 L451.49 677.85 L451.95 668.71 L452.41 678.22 L452.87 676.15 L453.33 678.44 L453.79 677.60 L454.25 675.62 L454.72 677.25 L455.18 677.86 L455.64 675.61 L456.10 677.50 L456.56 678.02 L457.02 677.56 L457.48 677.29 L457.94 677.90 L458.40 676.73 L458.86 677.08 L459.32 677.65 L459.78 676.00 L460.24 677.55 L460.70 678.38 L461.16 677.83 L461.62 671.29 L462.08 677.43 L462.54 678.01 L463.00 677.13" fill="none" stroke="#026db3" stroke-width="1.6" stroke-linejoin="round"/><path d="M486.00 678.50 L486.46 661.50 L486.92 666.76 L487.38 665.85 L487.84 666.57 L488.30 666.44 L488.76 668.31 L489.22 665.94 L489.68 666.43 L490.14 664.31 L490.60 665.35 L491.06 666.49 L491.52 661.50 L491.98 662.77 L492.44 664.76 L492.90 667.05 L493.36 663.59 L493.82 665.45 L494.28 666.60 L494.75 667.72 L495.21 666.19 L495.67 662.27 L496.13 665.70 L496.59 665.95 L497.05 665.81 L497.51 667.10 L497.97 665.69 L498.43 667.25 L498.89 668.53 L499.35 662.00 L499.81 666.49 L500.27 664.01 L500.73 668.19 L501.19 666.61 L501.65 663.29 L502.11 666.02 L502.57 665.63 L503.03 666.73 L503.49 671.18 L503.95 666.25 L504.41 666.31 L504.87 669.19 L505.33 664.42 L505.79 664.11 L506.25 661.96 L506.71 667.09 L507.17 663.80 L507.63 671.16 L508.09 661.50 L508.55 664.93 L509.01 664.42 L509.47 666.30 L509.93 669.15 L510.39 669.04 L510.85 663.39 L511.32 669.90 L511.78 664.22 L512.24 667.46 L512.70 663.75 L513.16 666.09 L513.62 667.28 L514.08 668.16 L514.54 665.20 L515.00 663.86 L515.46 662.89 L515.92 670.35 L516.38 678.13 L516.84 669.63 L517.30 663.41 L517.76 670.09 L518.22 672.93 L518.68 668.25 L519.14 670.81 L519.60 661.50 L520.06 677.22 L520.52 661.50 L520.98 669.66 L521.44 669.33 L521.90 670.64 L522.36 669.89 L522.82 675.85 L523.28 673.31 L523.74 665.67 L524.20 670.10 L524.66 663.31 L525.12 673.67 L525.58 662.96 L526.04 662.46 L526.50 668.69 L526.96 668.75 L527.42 670.62 L527.88 662.83 L528.35 665.33 L528.81 674.95 L529.27 664.03 L529.73 675.02 L530.19 670.52 L530.65 661.84 L531.11 664.95 L531.57 672.87 L532.03 672.52 L532.49 673.44 L532.95 676.44 L533.41 662.08 L533.87 669.29 L534.33 670.84 L534.79 676.13 L535.25 661.50 L535.71 671.55 L536.17 667.83 L536.63 673.93 L537.09 672.81 L537.55 670.09 L538.01 672.48 L538.47 664.64 L538.93 677.36 L539.39 661.50 L539.85 672.86 L540.31 674.73 L540.77 675.10 L541.23 662.12 L541.69 667.01 L542.15 664.03 L542.61 670.51 L543.07 676.30 L543.53 677.18 L543.99 661.50 L544.45 670.30 L544.92 671.21 L545.38 676.47 L545.84 663.29 L546.30 661.50 L546.76 672.24 L547.22 675.64 L547.68 666.49 L548.14 675.34 L548.60 675.65 L549.06 662.08 L549.52 663.95 L549.98 661.50 L550.44 674.42 L550.90 662.51 L551.36 671.54 L551.82 669.06 L552.28 675.64 L552.74 674.99 L553.20 675.08 L553.66 669.38 L554.12 667.50 L554.58 677.56 L555.04 673.80 L555.50 670.16 L555.96 662.89 L556.42 664.16 L556.88 672.56 L557.34 662.49 L557.80 661.63 L558.26 671.37 L558.72 674.68 L559.18 674.94 L559.64 669.84 L560.10 670.65 L560.56 664.41 L561.02 675.42 L561.48 666.38 L561.95 676.72 L562.41 668.26 L562.87 668.14 L563.33 668.27 L563.79 668.34 L564.25 668.33 L564.71 662.14 L565.17 665.48 L565.63 665.04 L566.09 666.60 L566.55 665.20 L567.01 662.82 L567.47 663.38 L567.93 663.27 L568.39 667.04 L568.85 667.17 L569.31 667.61 L569.77 666.29 L570.23 670.29 L570.69 666.75 L571.15 664.25 L571.61 666.65 L572.07 667.19 L572.53 665.17 L572.99 665.16 L573.45 666.98 L573.91 667.21 L574.37 667.58 L574.83 665.75 L575.29 666.03 L575.75 666.95 L576.21 666.19 L576.67 665.37 L577.13 666.94 L577.59 667.26 L578.05 665.87 L578.52 667.37 L578.98 664.66 L579.44 667.15 L579.90 665.95 L580.36 665.22 L580.82 665.85 L581.28 666.45 L581.74 667.30 L582.20 666.18 L582.66 664.24 L583.12 665.47 L583.58 666.87 L584.04 663.16 L584.50 666.67 L584.96 666.16 L585.42 666.55 L585.88 668.05 L586.34 666.55 L586.80 665.01 L587.26 666.74 L587.72 666.39 L588.18 666.00 L588.64 667.34 L589.10 663.76 L589.56 667.86 L590.02 666.00 L590.48 666.05 L590.94 668.73 L591.40 667.76 L591.86 665.09 L592.32 668.88 L592.78 667.18 L593.24 665.96 L593.70 666.36 L594.16 665.80 L594.62 667.12 L595.08 666.05 L595.55 666.75 L596.01 667.21 L596.47 666.36 L596.93 666.53 L597.39 667.38 L597.85 664.70 L598.31 666.05 L598.77 666.42 L599.23 666.82 L599.69 666.58 L600.15 667.01 L600.61 666.04 L601.07 664.62 L601.53 666.64 L601.99 667.68 L602.45 664.06 L602.91 666.44 L603.37 666.07 L603.83 667.64 L604.29 664.94 L604.75 666.54 L605.21 667.45 L605.67 667.64 L606.13 668.45 L606.59 665.64 L607.05 665.69 L607.51 666.50 L607.97 666.52 L608.43 665.42 L608.89 669.20 L609.35 665.43 L609.81 667.68 L610.27 666.78 L610.73 665.57 L611.19 666.34 L611.65 667.51 L612.12 667.32 L612.58 666.55 L613.04 665.71 L613.50 666.86 L613.96 667.49 L614.42 665.83 L614.88 665.13 L615.34 664.55 L615.80 668.01 L616.26 666.95 L616.72 667.09 L617.18 666.89 L617.64 667.15 L618.10 666.85 L618.56 665.76 L619.02 667.49 L619.48 663.68 L619.94 664.99 L620.40 665.16 L620.86 661.50 L621.32 664.27 L621.78 667.63 L622.24 662.65 L622.70 668.14 L623.16 669.85 L623.62 667.96 L624.08 665.08 L624.54 667.53 L625.00 662.71 L625.46 664.90 L625.92 664.55 L626.38 669.03 L626.84 667.16 L627.30 669.16 L627.76 663.40 L628.22 663.75 L628.68 664.28 L629.15 665.73 L629.61 666.54 L630.07 667.95 L630.53 671.47 L630.99 668.42 L631.45 663.19 L631.91 665.17 L632.37 668.13 L632.83 665.15 L633.29 662.73 L633.75 667.90 L634.21 669.19 L634.67 664.97 L635.13 667.41 L635.59 663.92 L636.05 666.95 L636.51 666.72 L636.97 668.88 L637.43 668.15 L637.89 678.50 L638.35 669.84 L638.81 665.22 L639.27 665.87 L639.73 671.68 L640.19 666.63 L640.65 665.90 L641.11 668.71 L641.57 666.26 L642.03 663.78 L642.49 665.86 L642.95 666.96 L643.41 666.60 L643.87 663.18 L644.33 670.24 L644.79 677.14 L645.25 663.65 L645.72 668.04 L646.18 666.53 L646.64 667.36 L647.10 668.62 L647.56 665.96 L648.02 664.05 L648.48 666.61 L648.94 665.84 L649.40 676.80 L649.86 667.12 L650.32 665.83 L650.78 668.03 L651.24 667.47 L651.70 665.46 L652.16 663.79 L652.62 666.49 L653.08 669.07 L653.54 668.31 L654.00 662.63 L654.00 678.50 L486.00 678.50 Z" fill="#dbeaf4"/><path d="M486.00 678.50 L486.46 661.50 L486.92 666.76 L487.38 665.85 L487.84 666.57 L488.30 666.44 L488.76 668.31 L489.22 665.94 L489.68 666.43 L490.14 664.31 L490.60 665.35 L491.06 666.49 L491.52 661.50 L491.98 662.77 L492.44 664.76 L492.90 667.05 L493.36 663.59 L493.82 665.45 L494.28 666.60 L494.75 667.72 L495.21 666.19 L495.67 662.27 L496.13 665.70 L496.59 665.95 L497.05 665.81 L497.51 667.10 L497.97 665.69 L498.43 667.25 L498.89 668.53 L499.35 662.00 L499.81 666.49 L500.27 664.01 L500.73 668.19 L501.19 666.61 L501.65 663.29 L502.11 666.02 L502.57 665.63 L503.03 666.73 L503.49 671.18 L503.95 666.25 L504.41 666.31 L504.87 669.19 L505.33 664.42 L505.79 664.11 L506.25 661.96 L506.71 667.09 L507.17 663.80 L507.63 671.16 L508.09 661.50 L508.55 664.93 L509.01 664.42 L509.47 666.30 L509.93 669.15 L510.39 669.04 L510.85 663.39 L511.32 669.90 L511.78 664.22 L512.24 667.46 L512.70 663.75 L513.16 666.09 L513.62 667.28 L514.08 668.16 L514.54 665.20 L515.00 663.86 L515.46 662.89 L515.92 670.35 L516.38 678.13 L516.84 669.63 L517.30 663.41 L517.76 670.09 L518.22 672.93 L518.68 668.25 L519.14 670.81 L519.60 661.50 L520.06 677.22 L520.52 661.50 L520.98 669.66 L521.44 669.33 L521.90 670.64 L522.36 669.89 L522.82 675.85 L523.28 673.31 L523.74 665.67 L524.20 670.10 L524.66 663.31 L525.12 673.67 L525.58 662.96 L526.04 662.46 L526.50 668.69 L526.96 668.75 L527.42 670.62 L527.88 662.83 L528.35 665.33 L528.81 674.95 L529.27 664.03 L529.73 675.02 L530.19 670.52 L530.65 661.84 L531.11 664.95 L531.57 672.87 L532.03 672.52 L532.49 673.44 L532.95 676.44 L533.41 662.08 L533.87 669.29 L534.33 670.84 L534.79 676.13 L535.25 661.50 L535.71 671.55 L536.17 667.83 L536.63 673.93 L537.09 672.81 L537.55 670.09 L538.01 672.48 L538.47 664.64 L538.93 677.36 L539.39 661.50 L539.85 672.86 L540.31 674.73 L540.77 675.10 L541.23 662.12 L541.69 667.01 L542.15 664.03 L542.61 670.51 L543.07 676.30 L543.53 677.18 L543.99 661.50 L544.45 670.30 L544.92 671.21 L545.38 676.47 L545.84 663.29 L546.30 661.50 L546.76 672.24 L547.22 675.64 L547.68 666.49 L548.14 675.34 L548.60 675.65 L549.06 662.08 L549.52 663.95 L549.98 661.50 L550.44 674.42 L550.90 662.51 L551.36 671.54 L551.82 669.06 L552.28 675.64 L552.74 674.99 L553.20 675.08 L553.66 669.38 L554.12 667.50 L554.58 677.56 L555.04 673.80 L555.50 670.16 L555.96 662.89 L556.42 664.16 L556.88 672.56 L557.34 662.49 L557.80 661.63 L558.26 671.37 L558.72 674.68 L559.18 674.94 L559.64 669.84 L560.10 670.65 L560.56 664.41 L561.02 675.42 L561.48 666.38 L561.95 676.72 L562.41 668.26 L562.87 668.14 L563.33 668.27 L563.79 668.34 L564.25 668.33 L564.71 662.14 L565.17 665.48 L565.63 665.04 L566.09 666.60 L566.55 665.20 L567.01 662.82 L567.47 663.38 L567.93 663.27 L568.39 667.04 L568.85 667.17 L569.31 667.61 L569.77 666.29 L570.23 670.29 L570.69 666.75 L571.15 664.25 L571.61 666.65 L572.07 667.19 L572.53 665.17 L572.99 665.16 L573.45 666.98 L573.91 667.21 L574.37 667.58 L574.83 665.75 L575.29 666.03 L575.75 666.95 L576.21 666.19 L576.67 665.37 L577.13 666.94 L577.59 667.26 L578.05 665.87 L578.52 667.37 L578.98 664.66 L579.44 667.15 L579.90 665.95 L580.36 665.22 L580.82 665.85 L581.28 666.45 L581.74 667.30 L582.20 666.18 L582.66 664.24 L583.12 665.47 L583.58 666.87 L584.04 663.16 L584.50 666.67 L584.96 666.16 L585.42 666.55 L585.88 668.05 L586.34 666.55 L586.80 665.01 L587.26 666.74 L587.72 666.39 L588.18 666.00 L588.64 667.34 L589.10 663.76 L589.56 667.86 L590.02 666.00 L590.48 666.05 L590.94 668.73 L591.40 667.76 L591.86 665.09 L592.32 668.88 L592.78 667.18 L593.24 665.96 L593.70 666.36 L594.16 665.80 L594.62 667.12 L595.08 666.05 L595.55 666.75 L596.01 667.21 L596.47 666.36 L596.93 666.53 L597.39 667.38 L597.85 664.70 L598.31 666.05 L598.77 666.42 L599.23 666.82 L599.69 666.58 L600.15 667.01 L600.61 666.04 L601.07 664.62 L601.53 666.64 L601.99 667.68 L602.45 664.06 L602.91 666.44 L603.37 666.07 L603.83 667.64 L604.29 664.94 L604.75 666.54 L605.21 667.45 L605.67 667.64 L606.13 668.45 L606.59 665.64 L607.05 665.69 L607.51 666.50 L607.97 666.52 L608.43 665.42 L608.89 669.20 L609.35 665.43 L609.81 667.68 L610.27 666.78 L610.73 665.57 L611.19 666.34 L611.65 667.51 L612.12 667.32 L612.58 666.55 L613.04 665.71 L613.50 666.86 L613.96 667.49 L614.42 665.83 L614.88 665.13 L615.34 664.55 L615.80 668.01 L616.26 666.95 L616.72 667.09 L617.18 666.89 L617.64 667.15 L618.10 666.85 L618.56 665.76 L619.02 667.49 L619.48 663.68 L619.94 664.99 L620.40 665.16 L620.86 661.50 L621.32 664.27 L621.78 667.63 L622.24 662.65 L622.70 668.14 L623.16 669.85 L623.62 667.96 L624.08 665.08 L624.54 667.53 L625.00 662.71 L625.46 664.90 L625.92 664.55 L626.38 669.03 L626.84 667.16 L627.30 669.16 L627.76 663.40 L628.22 663.75 L628.68 664.28 L629.15 665.73 L629.61 666.54 L630.07 667.95 L630.53 671.47 L630.99 668.42 L631.45 663.19 L631.91 665.17 L632.37 668.13 L632.83 665.15 L633.29 662.73 L633.75 667.90 L634.21 669.19 L634.67 664.97 L635.13 667.41 L635.59 663.92 L636.05 666.95 L636.51 666.72 L636.97 668.88 L637.43 668.15 L637.89 678.50 L638.35 669.84 L638.81 665.22 L639.27 665.87 L639.73 671.68 L640.19 666.63 L640.65 665.90 L641.11 668.71 L641.57 666.26 L642.03 663.78 L642.49 665.86 L642.95 666.96 L643.41 666.60 L643.87 663.18 L644.33 670.24 L644.79 677.14 L645.25 663.65 L645.72 668.04 L646.18 666.53 L646.64 667.36 L647.10 668.62 L647.56 665.96 L648.02 664.05 L648.48 666.61 L648.94 665.84 L649.40 676.80 L649.86 667.12 L650.32 665.83 L650.78 668.03 L651.24 667.47 L651.70 665.46 L652.16 663.79 L652.62 666.49 L653.08 669.07 L653.54 668.31 L654.00 662.63" fill="none" stroke="#026db3" stroke-width="1.6" stroke-linejoin="round"/></svg><div style="position:absolute;left:1565px;top:478.5px;width:10px;height:10px;background:#026db3"></div><div class="t" style="left:1580.40px;top:476.80px;font-size:13px;line-height:13px;color:#222;font-weight:normal;">New Visitor</div><div style="position:absolute;left:1662px;top:478.5px;width:10px;height:10px;background:#339a1c"></div><div class="t" style="left:1677.80px;top:476.80px;font-size:13px;line-height:13px;color:#222;font-weight:normal;">Returning Visitor</div><svg style="position:absolute;left:0;top:0" width="1920" height="1080"><circle cx="1677.2" cy="601" r="91.5" fill="#026db3"/><path d="M1677.2 601 L1677.2 509.5 A91.5 91.5 0 0 0 1600.57 551.00 Z" fill="#339a1c" stroke="#fff" stroke-width="1"/></svg><div class="t" style="left:1630.40px;top:533.98px;font-size:9px;line-height:9px;color:#fff;font-weight:normal;">15,8%</div><div class="t" style="left:1697.80px;top:660.88px;font-size:9px;line-height:9px;color:#fff;font-weight:normal;">84,2%</div><div class="t" style="left:289.40px;top:742.64px;font-size:12px;line-height:12px;color:#111;font-weight:bold;">Données démographiques</div><div style="position:absolute;left:283px;top:759px;width:478px;height:1px;background:#333"></div><div class="t" style="left:289.40px;top:770.21px;font-size:12.75px;line-height:12.75px;color:#1c6aa8;font-weight:normal;">Langue</div><div class="t" style="left:289.40px;top:801.31px;font-size:12.75px;line-height:12.75px;color:#1c6aa8;font-weight:normal;">Pays</div><div class="t" style="left:289.40px;top:831.91px;font-size:12.75px;line-height:12.75px;color:#1c6aa8;font-weight:normal;">Ville</div><div class="t" style="left:289.40px;top:866.24px;font-size:12px;line-height:12px;color:#111;font-weight:bold;">Système</div><div style="position:absolute;left:283px;top:882px;width:478px;height:1px;background:#333"></div><div class="t" style="left:289.40px;top:893.41px;font-size:12.75px;line-height:12.75px;color:#1c6aa8;font-weight:normal;">Navigateur</div><div style="position:absolute;left:283px;top:914px;width:478px;height:31px;background:#d2e4f1"></div><div class="t" style="left:289.40px;top:923.81px;font-size:12.75px;line-height:12.75px;color:#222;font-weight:normal;">Système d'exploitation</div><svg style="position:absolute;left:746px;top:925px;" width="5" height="8" viewBox="0 0 5 8"><path d="M0 0 L4.5 4 L0 8Z" fill="#333"/></svg><div class="t" style="left:289.40px;top:955.11px;font-size:12.75px;line-height:12.75px;color:#1c6aa8;font-weight:normal;">Fournisseur de services</div><div class="t" style="left:289.40px;top:988.59px;font-size:12px;line-height:12px;color:#111;font-weight:bold;">Mobile</div><div style="position:absolute;left:283px;top:1005px;width:478px;height:1px;background:#333"></div><div class="t" style="left:289.40px;top:1015.81px;font-size:12.75px;line-height:12.75px;color:#1c6aa8;font-weight:normal;">Système d'exploitation</div><div class="t" style="left:289.40px;top:1047.01px;font-size:12.75px;line-height:12.75px;color:#1c6aa8;font-weight:normal;">Fournisseur de services</div><div class="t" style="left:289.40px;top:1078.01px;font-size:12.75px;line-height:12.75px;color:#1c6aa8;font-weight:normal;">Résolution d'écran</div><div class="t" style="left:810.60px;top:742.64px;font-size:12px;line-height:12px;color:#111;font-weight:bold;">Système d'exploitation</div><div class="t" style="right:217.00px;top:742.64px;font-size:12px;line-height:12px;color:#111;font-weight:bold;">Utilisateurs</div><div class="t" style="left:1719.10px;top:742.64px;font-size:12px;line-height:12px;color:#111;font-weight:bold;">% Utilisateurs</div><div style="position:absolute;left:781px;top:759px;width:1096px;height:1px;background:#333"></div><div style="position:absolute;left:781px;top:760px;width:1096px;height:30px;background:#f4f4f4"></div><div style="position:absolute;left:781px;top:790px;width:1096px;height:1px;background:#c4c4c4"></div><div class="t" style="left:789.40px;top:769.92px;font-size:12.5px;line-height:12.5px;color:#222;font-weight:normal;">1.</div><div class="t" style="left:810.60px;top:769.71px;font-size:12.75px;line-height:12.75px;color:#1c6aa8;font-weight:normal;">iOS</div><div class="t" style="right:217.50px;top:770.13px;font-size:12.25px;line-height:12.25px;color:#222;font-weight:normal;">1 299</div><div style="position:absolute;left:1719px;top:768px;width:32.9px;height:15px;background:#026db3"></div><div class="t" style="left:1762.70px;top:769.25px;font-size:11.75px;line-height:11.75px;color:#222;font-weight:normal;">34,22 %</div><div style="position:absolute;left:781px;top:821px;width:1096px;height:1px;background:#c4c4c4"></div><div class="t" style="left:789.40px;top:800.92px;font-size:12.5px;line-height:12.5px;color:#222;font-weight:normal;">2.</div><div class="t" style="left:810.60px;top:800.71px;font-size:12.75px;line-height:12.75px;color:#1c6aa8;font-weight:normal;">Android</div><div class="t" style="right:217.50px;top:801.13px;font-size:12.25px;line-height:12.25px;color:#222;font-weight:normal;">1 258</div><div style="position:absolute;left:1719px;top:799px;width:31.8px;height:15px;background:#026db3"></div><div class="t" style="left:1761.60px;top:800.25px;font-size:11.75px;line-height:11.75px;color:#222;font-weight:normal;">33,14 %</div><div style="position:absolute;left:781px;top:822px;width:1096px;height:30px;background:#f4f4f4"></div><div style="position:absolute;left:781px;top:852px;width:1096px;height:1px;background:#c4c4c4"></div><div class="t" style="left:789.40px;top:831.92px;font-size:12.5px;line-height:12.5px;color:#222;font-weight:normal;">3.</div><div class="t" style="left:810.60px;top:831.71px;font-size:12.75px;line-height:12.75px;color:#1c6aa8;font-weight:normal;">Windows</div><div class="t" style="right:217.50px;top:832.13px;font-size:12.25px;line-height:12.25px;color:#222;font-weight:normal;">818</div><div style="position:absolute;left:1719px;top:830px;width:20.7px;height:15px;background:#026db3"></div><div class="t" style="left:1750.50px;top:831.25px;font-size:11.75px;line-height:11.75px;color:#222;font-weight:normal;">21,55 %</div><div style="position:absolute;left:781px;top:883px;width:1096px;height:1px;background:#c4c4c4"></div><div class="t" style="left:789.40px;top:862.92px;font-size:12.5px;line-height:12.5px;color:#222;font-weight:normal;">4.</div><div class="t" style="left:810.60px;top:862.71px;font-size:12.75px;line-height:12.75px;color:#1c6aa8;font-weight:normal;">Macintosh</div><div class="t" style="right:217.50px;top:863.13px;font-size:12.25px;line-height:12.25px;color:#222;font-weight:normal;">261</div><div style="position:absolute;left:1719px;top:861px;width:6.6px;height:15px;background:#026db3"></div><div class="t" style="left:1736.40px;top:862.25px;font-size:11.75px;line-height:11.75px;color:#222;font-weight:normal;">6,88 %</div><div style="position:absolute;left:781px;top:884px;width:1096px;height:30px;background:#f4f4f4"></div><div style="position:absolute;left:781px;top:914px;width:1096px;height:1px;background:#c4c4c4"></div><div class="t" style="left:789.40px;top:893.92px;font-size:12.5px;line-height:12.5px;color:#222;font-weight:normal;">5.</div><div class="t" style="left:810.60px;top:893.71px;font-size:12.75px;line-height:12.75px;color:#1c6aa8;font-weight:normal;">Linux</div><div class="t" style="right:217.50px;top:894.13px;font-size:12.25px;line-height:12.25px;color:#222;font-weight:normal;">82</div><div style="position:absolute;left:1719px;top:892px;width:2px;height:15px;background:#026db3"></div><div class="t" style="left:1730.50px;top:893.25px;font-size:11.75px;line-height:11.75px;color:#222;font-weight:normal;">2,16 %</div><div style="position:absolute;left:781px;top:945px;width:1096px;height:1px;background:#c4c4c4"></div><div class="t" style="left:789.40px;top:924.92px;font-size:12.5px;line-height:12.5px;color:#222;font-weight:normal;">6.</div><div class="t" style="left:810.60px;top:924.71px;font-size:12.75px;line-height:12.75px;color:#1c6aa8;font-weight:normal;">(not set)</div><div class="t" style="right:217.50px;top:925.13px;font-size:12.25px;line-height:12.25px;color:#222;font-weight:normal;">73</div><div style="position:absolute;left:1719px;top:923px;width:2px;height:15px;background:#026db3"></div><div class="t" style="left:1730.50px;top:924.25px;font-size:11.75px;line-height:11.75px;color:#222;font-weight:normal;">1,92 %</div><div style="position:absolute;left:781px;top:946px;width:1096px;height:30px;background:#f4f4f4"></div><div style="position:absolute;left:781px;top:976px;width:1096px;height:1px;background:#c4c4c4"></div><div class="t" style="left:789.40px;top:955.92px;font-size:12.5px;line-height:12.5px;color:#222;font-weight:normal;">7.</div><div class="t" style="left:810.60px;top:955.71px;font-size:12.75px;line-height:12.75px;color:#1c6aa8;font-weight:normal;">Chrome OS</div><div class="t" style="right:217.50px;top:956.13px;font-size:12.25px;line-height:12.25px;color:#222;font-weight:normal;">3</div><div style="position:absolute;left:1719px;top:954px;width:1px;height:15px;background:#026db3"></div><div class="t" style="left:1729.50px;top:955.25px;font-size:11.75px;line-height:11.75px;color:#222;font-weight:normal;">0,08 %</div><div style="position:absolute;left:781px;top:1007px;width:1096px;height:1px;background:#c4c4c4"></div><div class="t" style="left:789.40px;top:986.92px;font-size:12.5px;line-height:12.5px;color:#222;font-weight:normal;">8.</div><div class="t" style="left:810.60px;top:986.71px;font-size:12.75px;line-height:12.75px;color:#1c6aa8;font-weight:normal;">BlackBerry</div><div class="t" style="right:217.50px;top:987.13px;font-size:12.25px;line-height:12.25px;color:#222;font-weight:normal;">1</div><div style="position:absolute;left:1719px;top:985px;width:1px;height:15px;background:#026db3"></div><div class="t" style="left:1729.50px;top:986.25px;font-size:11.75px;line-height:11.75px;color:#222;font-weight:normal;">0,03 %</div><div style="position:absolute;left:781px;top:1008px;width:1096px;height:30px;background:#f4f4f4"></div><div style="position:absolute;left:781px;top:1038px;width:1096px;height:1px;background:#c4c4c4"></div><div class="t" style="left:789.40px;top:1017.92px;font-size:12.5px;line-height:12.5px;color:#222;font-weight:normal;">9.</div><div class="t" style="left:810.60px;top:1017.71px;font-size:12.75px;line-height:12.75px;color:#1c6aa8;font-weight:normal;">Windows Phone</div><div class="t" style="right:217.50px;top:1018.13px;font-size:12.25px;line-height:12.25px;color:#222;font-weight:normal;">1</div><div style="position:absolute;left:1719px;top:1016px;width:1px;height:15px;background:#026db3"></div><div class="t" style="left:1729.50px;top:1017.25px;font-size:11.75px;line-height:11.75px;color:#222;font-weight:normal;">0,03 %</div><div class="t" style="right:43.50px;top:1048.18px;font-size:13.25px;line-height:13.25px;color:#1b5690;font-weight:normal;">Afficher le rapport complet</div><div style="position:absolute;left:1904px;top:64px;width:16px;height:1016px;background:#e7e7e7"></div><div style="position:absolute;left:1904px;top:64px;width:16px;height:17px;background:#f3f3f3"></div><svg style="position:absolute;left:1907px;top:69px;" width="10" height="8" viewBox="0 0 10 8"><path d="M1 6.5 L5 2.5 L9 6.5" stroke="#333" stroke-width="1.8" fill="none"/></svg><div style="position:absolute;left:1904px;top:95px;width:15px;height:858px;background:#b7b7b7"></div><svg style="position:absolute;left:1907px;top:1069px;" width="10" height="8" viewBox="0 0 10 8"><path d="M1 1.5 L5 5.5 L9 1.5" stroke="#333" stroke-width="1.8" fill="none"/></svg>
</body></html>
